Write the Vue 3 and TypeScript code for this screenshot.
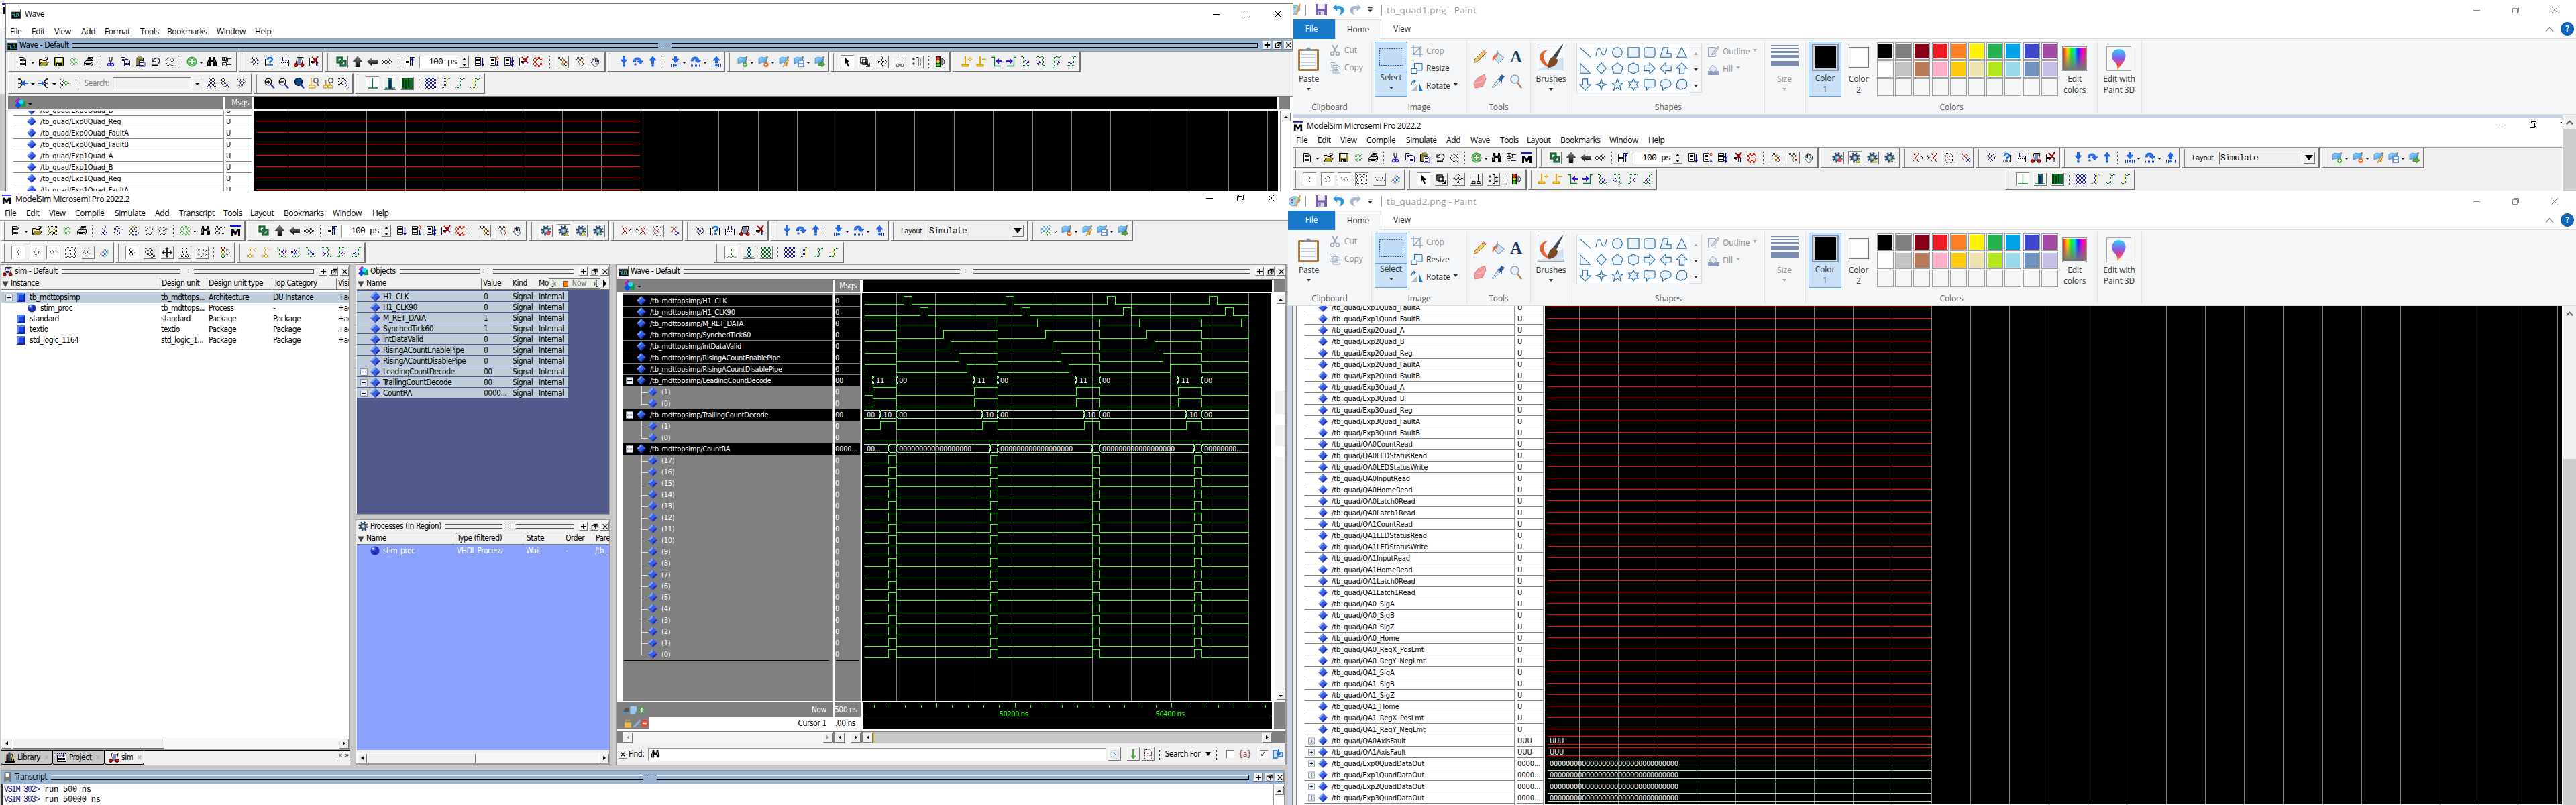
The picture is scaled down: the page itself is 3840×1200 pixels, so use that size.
<script setup lang="ts">
interface Tool { name: string; mods: string; w: number; ml: number }
interface Bar { w: number; ml: number; tools: Tool[] }
interface Cell { text: string; w: number }
interface Signal { name: string; val: string; kind: string }

const WIDTHS: Record<string, number> = { v: 6, '|': 2, time: 75, search: 178, layout: 182, M: 16 }

// "name@centre" tokens; ~ disabled, ! raised button, _ pressed button
function parse(spec: string): Tool[] {
  let end = 0
  return spec.split(' ').map((t) => {
    const m = /^([~!_]*)(.+)@(\d+)$/.exec(t)!
    const mods = (m[1].includes('~') ? ' off' : '') + (m[1].includes('!') ? ' raised' : '') + (m[1].includes('_') ? ' pressed' : '')
    const w = WIDTHS[m[2]] ?? (/raised|pressed/.test(mods) ? 20 : 16)
    const left = Number(m[3]) - w / 2
    const tool = { name: m[2], mods, w, ml: left - end }
    end = left + w
    return tool
  })
}
const bar = (w: number, spec: string, ml = 0): Bar => ({ w, ml, tools: parse(spec) })
const cells = (spec: string): Cell[] => {
  const parts = spec.split(';').map((p) => p.split('@'))
  return parts.map((p, i) => ({ text: p[0], w: i < parts.length - 1 ? Number(parts[i + 1][1]) - Number(p[1]) : 60 }))
}

const FILE = 'new@20 v@36 open@52 save@75 ~reload@97 print@119 |@135 cut@152 copy@174 paste@196 undo@219 ~redo@240 |@256 add@273 v@287 find@303 tree@325'
const FILE_OFF = 'new@20 v@36 open@52 ~save@75 ~reload@97 print@119 |@135 ~cut@152 ~copy@174 ~paste@196 ~undo@219 ~redo@240 |@256 ~add@273 ~v@287 find@303 ~tree@325'
const RUN = '!link@24 up@48 left@70 ~right@92 |@109 restart@125 time@177 run1@230 run2@252 run3@274 brk@296 ~stop@317 |@335 !~perf@353 !~perf2@379 hand@402'
const GEAR = '!gearA@25 _gearB@51 !gearC@77 !gearD@103'
const COV = '~covA@23 ~covB@44 !~covC@69 ~covD@95'
const COMP = '~comp@23 qst@45 outp@67 simu@89 endx@111'
const STEP = 'sIn@24 sOver@45 sOut@67 |@83 sInB@101 v@114 sOverB@131 v@145 sOutB@162'
const BOOK = 'bkA@23 v@37 bkB@54 v@68 bkC@85 bkD@107 v@121 bkE@138'
const BOOK_OFF = BOOK.replace('bkA@23 v@37', '~bkA@23 ~v@37')
const IO = '_~ioI@24 _~ioO@51 _~ioIO@76 _~ioT@102 !~ioALL@128 ~io6@152'
const MOUSE = '_ptr@24 !zrect@50 !~pan@76 !edges@102 !medit@128 |@146 light@162'
const MOUSE_OFF = '_~ptr@24 !~zrect@50 !pan@76 !~edges@102 !~medit@128 |@146 ~light@162'
const CUR = 'cuA@21 cuB@43 cuC@66 cuD@87 ~cuE@109 ~cuF@131 ~cuG@155 ~cuH@176'
const CUR_OFF = CUR.replace('cuA@', '~cuA@').replace('cuB@', '~cuB@').replace('cuC@', '~cuC@').replace('cuD@', '~cuD@')
const EDGE = '_edA@25 !edB@51 !edC@77 |@95 ~edD@112 ~edE@134 ~edF@156 ~edG@178'
const EDGE_OFF = EDGE.replace('_edA', '_~edA').replace('!edB', '!~edB').replace('!edC', '!~edC')

const mainRow = (file: string, book: string): Bar[] => [
  bar(364, file + ' M@348'), bar(418, RUN), bar(120, GEAR), bar(108, COV), bar(126, COMP),
  bar(177, STEP), bar(206, 'layout@107'), bar(154, book),
]

const windows = [
  {
    id: 'right', title: 'ModelSim Microsemi Pro 2022.2',
    menu: cells('File@7;Edit@39;View@73;Compile@112;Simulate@171;Add@231;Wave@267;Tools@311;Layout@351;Bookmarks@401;Window@474;Help@532'),
    rows: [mainRow(FILE, BOOK), [bar(168, IO), bar(179, MOUSE), bar(192, CUR), bar(194, EDGE, 517)]],
  },
  {
    id: 'main', title: 'ModelSim Microsemi Pro 2022.2',
    menu: cells('File@7;Edit@39;View@73;Compile@112;Simulate@171;Add@231;Transcript@267;Tools@333;Layout@373;Bookmarks@423;Window@496;Help@555'),
    rows: [mainRow(FILE_OFF, BOOK_OFF), [bar(168, IO), bar(179, MOUSE_OFF), bar(192, CUR_OFF), bar(194, EDGE_OFF, 517)]],
  },
  {
    id: 'wave', title: 'Wave',
    menu: cells('File@7;Edit@39;View@73;Add@113;Format@148;Tools@201;Bookmarks@241;Window@315;Help@372'),
    rows: [
      [bar(342, FILE), bar(126, COMP), bar(419, RUN), bar(176, STEP), bar(153, BOOK), bar(179, MOUSE), bar(192, CUR)],
      [bar(364, 'insL@21 v@36 insR@52 v@68 ~insC@84 |@101 search@201 ~fnA@303 ~fnB@322 ~fnC@346'), bar(149, 'zIn@23 zOut@44 zFull@67 zCurA@89 zCurB@111 ~zSel@133'), bar(194, EDGE)],
    ],
  },
]

const sig = (name: string, val = 'U', kind = 'top'): Signal => ({ name, val, kind })
const quad = (n: string) => sig('/tb_quad/' + n)
const topSignals: Signal[] = ['Exp0Quad_B', 'Exp0Quad_Reg', 'Exp0Quad_FaultA', 'Exp0Quad_FaultB', 'Exp1Quad_A', 'Exp1Quad_B', 'Exp1Quad_Reg', 'Exp1Quad_FaultA'].map(quad)
const reads = ['CountRead', 'LEDStatusRead', 'LEDStatusWrite', 'InputRead', 'HomeRead', 'Latch0Read', 'Latch1Read']
const pins = ['_SigA', '_SigB', '_SigZ', '_Home', '_RegX_PosLmt', '_RegY_NegLmt']
const quadSignals: Signal[] = [
  ...['Exp1Quad_FaultA', 'Exp1Quad_FaultB'].map(quad),
  ...['Exp2Quad', 'Exp3Quad'].flatMap((q) => ['_A', '_B', '_Reg', '_FaultA', '_FaultB'].map((s) => quad(q + s))),
  ...['QA0', 'QA1'].flatMap((q) => reads.map((s) => quad(q + s))),
  ...['QA0', 'QA1'].flatMap((q) => pins.map((s) => quad(q + s))),
  ...['QA0AxisFault', 'QA1AxisFault'].map((n) => sig('/tb_quad/' + n, 'UUU', 'plus')),
  ...[0, 1, 2, 3].map((n) => sig(`/tb_quad/Exp${n}QuadDataOut`, '0000...', 'plus')),
]
const simSignals: Signal[] = [
  ...['H1_CLK', 'H1_CLK90', 'M_RET_DATA', 'SynchedTick60', 'intDataValid', 'RisingACountEnablePipe', 'RisingACountDisablePipe'].map((n) => sig('/tb_mdttopsimp/' + n, '0')),
  sig('/tb_mdttopsimp/LeadingCountDecode', '00', 'minus'), sig('(1)', '0', 'child'), sig('(0)', '0', 'child last'),
  sig('/tb_mdttopsimp/TrailingCountDecode', '00', 'minus'), sig('(1)', '0', 'child'), sig('(0)', '0', 'child last'),
  sig('/tb_mdttopsimp/CountRA', '0000...', 'minus'),
  ...Array.from({ length: 18 }, (_, i) => sig(`(${17 - i})`, '0', i === 17 ? 'child last' : 'child')),
]

// Waveform geometry, relative to the black plotting area
const END = 576
const FALLS = [51, 202, 354, 506]
const mid = (row: number) => 10 + row * 17
function trace(row: number, start: number, edges: number[]): string {
  const hi = mid(row) - 5.5, lo = mid(row) + 6.5
  let level = start
  let d = `M4 ${level ? hi : lo}`
  for (const x of edges) { d += `H${x + 0.5}`; level = 1 - level; d += `V${level ? hi : lo}` }
  return d + `H${END}`
}
const pulses = (rise: number, width: number) => [0, 152, 303, 455].flatMap((o) => [rise + o, rise + o + width])
const upto = (rises: number[]) => FALLS.flatMap((f, i) => (i < rises.length ? [f, rises[i]] : [f]))
const lead = [16, 51, 167, 202, 319, 354, 471, 506]
const trail = [27, 51, 179, 202, 331, 354, 483, 506]
const count = [39, 51, 191, 202, 343, 354, 495, 506]
const traces: string[] = [
  trace(0, 0, pulses(62, 12)), trace(1, 0, pulses(86, 12)),
  trace(2, 1, upto([109, 261, 413, 565])), trace(3, 1, upto([121, 273, 424, 575])),
  trace(4, 1, upto([132, 284, 436])), trace(5, 1, upto([144, 296, 448])),
  trace(6, 0, [4, ...upto([156, 308, 459])]),
  trace(8, 0, lead), trace(9, 0, lead), trace(11, 0, trail), trace(12, 0, []),
  ...Array.from({ length: 18 }, (_, i) => trace(14 + i, 0, count)),
]
function bus(row: number, edges: number[]): string {
  const hi = mid(row) - 5.5, lo = mid(row) + 6.5, c = mid(row) + 0.5
  const pts = [1, ...edges, END + 2]
  let d = ''
  for (let i = 0; i < pts.length - 1; i++) {
    const a = pts[i] + 1.5, b = pts[i + 1] - 1
    d += `M${a} ${hi}H${b}M${a} ${lo}H${b}`
    if (i) d += `M${a} ${hi}L${a - 1.5} ${c}L${a} ${lo}`
    if (i < pts.length - 2) d += `M${b} ${hi}L${b + 1.5} ${c}L${b} ${lo}`
  }
  return d
}
const buses = [bus(7, lead), bus(10, trail), bus(13, count)]
const busText: { x: number; row: number; t: string }[] = [
  ...[0, 2, 4, 6].flatMap((i) => [
    { x: lead[i] + 5, row: 7, t: '11' }, { x: lead[i + 1] + 4, row: 7, t: '00' },
    { x: trail[i] + 5, row: 10, t: '10' }, { x: trail[i + 1] + 4, row: 10, t: '00' },
    { x: count[i + 1] + 4, row: 13, t: i === 6 ? '00000000...' : '0'.repeat(18) },
  ]),
  { x: 7, row: 10, t: '00' }, { x: 7, row: 13, t: '00...' },
]
const grid = (first: number, n: number, h: number, pitch = 58.35) =>
  Array.from({ length: n }, (_, i) => `M${Math.round(first + i * pitch) + 0.5} 0V${h}`).join('')
const ticks = Array.from({ length: 26 }, (_, i) => ({ x: Math.round(16.5 + i * 23.34) + 0.5, major: i % 5 === 4 }))

const instances = [
  { n: 'tb_mdttopsimp', u: 'tb_mdttops...', t: 'Architecture', c: 'DU Instance', ico: 'block', cls: 'sel' },
  { n: 'stim_proc', u: 'tb_mdttops...', t: 'Process', c: '-', ico: 'ball', cls: 'sub' },
  { n: 'standard', u: 'standard', t: 'Package', c: 'Package', ico: 'block', cls: '' },
  { n: 'textio', u: 'textio', t: 'Package', c: 'Package', ico: 'block', cls: '' },
  { n: 'std_logic_1164', u: 'std_logic_1...', t: 'Package', c: 'Package', ico: 'block', cls: '' },
]
const objects = [
  ['H1_CLK', '0'], ['H1_CLK90', '0'], ['M_RET_DATA', '1'], ['SynchedTick60', '1'], ['intDataValid', '0'],
  ['RisingACountEnablePipe', '0'], ['RisingACountDisablePipe', '0'], ['LeadingCountDecode', '00'], ['TrailingCountDecode', '00'], ['CountRA', '0000...'],
]
const tabs = [{ n: 'Library', i: 'lib', w: 77 }, { n: 'Project', i: 'outp', w: 78 }, { n: 'sim', i: 'simu', w: 59 }]

const paints = ['tb_quad1.png - Paint', 'tb_quad2.png - Paint']
const swatches = [
  '#000000', '#7f7f7f', '#880015', '#ed1c24', '#ff7f27', '#fff200', '#22b14c', '#00a2e8', '#3f48cc', '#a349a4',
  '#ffffff', '#c3c3c3', '#b97a57', '#ffaec9', '#ffc90e', '#efe4b0', '#b5e61d', '#99d9ea', '#7092be', '#c8bfe7',
  ...Array(10).fill('#f5f6f7'),
]
const shapes = [
  'M1 2L19 18', 'M1 16C4 -2 8 2 10 9S16 18 19 3', 'M10 2A8 8 0 1 1 9.9 2Z', 'M1 2H19V18H1Z', 'M5 2H15Q19 2 19 6V14Q19 18 15 18H5Q1 18 1 14V6Q1 2 5 2Z', 'M6 2H14L12 12H19V18H1Z', 'M10 2L18 18H2Z',
  'M2 2L18 18H2Z', 'M10 1L18 10L10 19L2 10Z', 'M10 1L19 8L16 18H4L1 8Z', 'M10 1L18 5V15L10 19L2 15V5Z', 'M1 6H10V1L19 10L10 19V14H1Z', 'M19 6H10V1L1 10L10 19V14H19Z', 'M6 19V10H1L10 1L19 10H14V19Z',
  'M6 1V10H1L10 19L19 10H14V1Z', 'M10 1L12 8L19 10L12 12L10 19L8 12L1 10L8 8Z', 'M10 1L12.5 7.5H19L14 11.5L16 19L10 14.5L4 19L6 11.5L1 7.5H7.5Z', 'M10 1L12.5 5.5H18L15 10L18 14.5H12.5L10 19L7.5 14.5H2L5 10L2 5.5H7.5Z', 'M3 2H17Q19 2 19 4V12Q19 14 17 14H9L5 19V14H3Q1 14 1 12V4Q1 2 3 2Z', 'M10 2C22 2 22 15 10 15L5 19V14C-3 9 2 2 10 2Z', 'M5 4Q7 0 10 2Q14 0 16 4Q20 6 18 9Q20 13 16 15Q14 19 11 16Q8 20 5 16Q0 16 2 12Q0 8 3 7Q2 4 5 4Z',
]
const zeros32 = '0'.repeat(32)
</script>

<template>
  <div class="desk">
    <svg class="defs" width="0" height="0">
      <defs>
        <linearGradient id="gGlass" x1="0" y1="0" x2="1" y2="1"><stop offset="0" stop-color="#9adcff" /><stop offset="1" stop-color="#3a8fe0" /></linearGradient>
        <linearGradient id="gArrow" x1="0" y1="0" x2="0" y2="1"><stop offset="0" stop-color="#888" /><stop offset="1" stop-color="#000" /></linearGradient>
        <linearGradient id="gRainbow"><stop offset="0" stop-color="#f22" /><stop offset=".18" stop-color="#fd0" /><stop offset=".36" stop-color="#1e2" /><stop offset=".5" stop-color="#0dd" /><stop offset=".66" stop-color="#22f" /><stop offset=".85" stop-color="#e0d" /><stop offset="1" stop-color="#f24" /></linearGradient>
        <linearGradient id="gFade" x1="0" y1="0" x2="0" y2="1"><stop offset=".2" stop-color="#777" stop-opacity="0" /><stop offset="1" stop-color="#777" /></linearGradient>
        <linearGradient id="gPin" x1="0" y1="0" x2="0" y2="1"><stop offset="0" stop-color="#2bd4f5" /><stop offset=".45" stop-color="#8a5be8" /><stop offset=".75" stop-color="#ee3f70" /><stop offset="1" stop-color="#ffc000" /></linearGradient>
      </defs>
      <symbol id="new" viewBox="0 0 16 16"><path d="M3.5 1.5H10L13.5 5V14.5H3.5Z" fill="#fff" stroke="#000" /><path d="M5 4.5H9M5 6.5H12M5 8.5H12M5 10.5H12M5 12.5H12M10 1V5H13" stroke="#222" fill="none" /></symbol>
      <symbol id="open" viewBox="0 0 16 16"><path d="M1.5 14V4.500H6L7 6.500H12V9" fill="#ffe98a" stroke="#000" /><path d="M1.500 14.500L4.500 8.500H15.500L12 14.500Z" fill="#a89a10" stroke="#000" /><path d="M9 3Q12 0 14 4M14 1V4.500H11" fill="none" stroke="#000" /></symbol>
      <symbol id="save" viewBox="0 0 16 16"><path d="M1.500 1.500H14.500V14.500H2.500L1.500 13Z" fill="#9a9010" stroke="#000" /><path d="M4 2H12V8H4Z" fill="#f4f4f4" /><path d="M4 10H12V14H4Z" fill="#000" /><path d="M5 11H7V14H5Z" fill="#fff" /></symbol>
      <symbol id="reload" viewBox="0 0 16 16"><path d="M2 7Q3 2 9 3L9 1L14 5L9 8V6Q6 5 5 8ZM14 9Q13 14 7 13V15L2 11L7 8V10Q10 11 11 8Z" fill="#4cae4c" /></symbol>
      <symbol id="print" viewBox="0 0 16 16"><path d="M5 6L7 1.500H14L12 6" fill="#fff" stroke="#000" /><path d="M1.500 8.500L4 6.500H14.500V11L12 14.500H2Z" fill="#ddd" stroke="#000" /><path d="M2 10.500H12L14 8M7 3.500H12M6 5H11M4 12.500H10" stroke="#000" fill="none" /></symbol>
      <symbol id="cut" viewBox="0 0 16 16"><path d="M6 1V5L9 11M10 1V5L7 11" stroke="#223" fill="none" stroke-width="1.300" /><circle cx="5.500" cy="12.500" r="2" fill="none" stroke="#2222c8" stroke-width="1.300" /><circle cx="10.500" cy="12.500" r="2" fill="none" stroke="#2222c8" stroke-width="1.300" /></symbol>
      <symbol id="copy" viewBox="0 0 16 16"><path d="M1.500 1.500H7L9.500 4V11.500H1.500Z" fill="#fff" stroke="#222" /><path d="M6.500 4.500H12L14.500 7V14.500H6.500Z" fill="#fff" stroke="#1a1a90" /><path d="M3 4.500H6M3 6.500H6M8 8.500H13M8 10.500H13M8 12.500H13" stroke="#1a1a90" /></symbol>
      <symbol id="paste" viewBox="0 0 16 16"><path d="M1.500 2.500H12.500V13.500H1.500Z" fill="#8c8640" stroke="#000" /><path d="M4 1H10V4H4Z" fill="#e8d850" stroke="#000" stroke-width=".6" /><path d="M6.500 6.500H12L15 9V15H6.500Z" fill="#fff" stroke="#1a1a90" /><path d="M8 9.500H13M8 11.500H13M8 13.500H13" stroke="#1a1a90" /></symbol>
      <symbol id="undo" viewBox="0 0 16 16"><path d="M4 7Q7 1 12 3Q16 7 11 12M3 3V8H8" fill="none" stroke="#223" stroke-width="1.300" /><path d="M3 13.500H12" stroke="#000" stroke-width="2" /></symbol>
      <symbol id="redo" viewBox="0 0 16 16"><path d="M12 7Q9 1 4 3Q0 7 5 12M13 3V8H8" fill="none" stroke="#222" stroke-width="1.400" /><path d="M4 13.500H13" stroke="#222" stroke-width="2" /></symbol>
      <symbol id="add" viewBox="0 0 16 16"><circle cx="8" cy="8" r="7" fill="#52b152" stroke="#2e8b2e" /><circle cx="8" cy="8" r="5.500" fill="none" stroke="#a0dca0" /><path d="M8 4V12M4 8H12" stroke="#fff" stroke-width="2" /></symbol>
      <symbol id="find" viewBox="0 0 16 16"><path d="M3 1H6V4L8 6L10 4V1H13V4L15 9V14H10V9H6V14H1V9L3 4Z" fill="#000" /><path d="M4 5L3 9V12M12 5V9" stroke="#fff" fill="none" stroke-width=".8" /></symbol>
      <symbol id="tree" viewBox="0 0 16 16"><path d="M1.500 1.500H7.500V6.500H1.500ZM1.500 9.500H7.500V14.500H1.500ZM8 3.500H15M8 12.500H15M3 4H6M4.500 2.500V5.500M3 12H6M9.500 4V8H5" fill="none" stroke="#222" /></symbol>
      <symbol id="M" viewBox="0 0 16 16"><path d="M0 0H16V2H0Z" fill="#1010ff" /><path d="M1 5H5L8 10L11 5H15V16H12V9L9 14H7L4 9V16H1Z" fill="#000" /></symbol>
      <symbol id="link" viewBox="0 0 16 16"><path d="M2 2H9V9H2ZM7 7H14V14H7Z" fill="none" stroke="#043d1a" stroke-width="3" /><path d="M2 2H9V9H2ZM7 7H14V14H7Z" fill="none" stroke="#27a052" stroke-width="1" /></symbol>
      <symbol id="up" viewBox="0 0 16 16"><path d="M8 0L15 8H11V16H5V8H1Z" fill="url(#gArrow)" stroke="#222" stroke-width=".5" /></symbol>
      <symbol id="left" viewBox="0 0 16 16"><path d="M0 8L7 2V5H16V11H7V14Z" fill="url(#gArrow)" /></symbol>
      <symbol id="right" viewBox="0 0 16 16"><path d="M16 8L9 2V5H0V11H9V14Z" fill="#333" /></symbol>
      <symbol id="restart" viewBox="0 0 16 16"><path d="M1.500 2.500H9.500V14.500H1.500Z" fill="#fff" stroke="#222" /><path d="M3 5.500H8M3 7.500H8M3 9.500H8M3 11.500H8" stroke="#000" /><path d="M9 1.500H16" stroke="#009" /><path d="M12.500 14V4M10.500 6L12.500 3L14.500 6" fill="none" stroke="#009" stroke-width="1.300" /></symbol>
      <symbol id="run1" viewBox="0 0 16 16"><path d="M1.500 1.500H9.500V13.500H1.500Z" fill="#fff" stroke="#222" /><path d="M3 4.500H8M3 6.500H8M3 8.500H8M3 10.500H8" stroke="#000" /><path d="M12.500 3V14M10.500 11L12.500 14.500L14.500 11" fill="none" stroke="#009" stroke-width="1.300" /></symbol>
      <symbol id="run2" viewBox="0 0 16 16"><path d="M1.500 1.500H9.500V13.500H1.500Z" fill="#fff" stroke="#222" /><path d="M3 4.500H8M3 6.500H8M3 8.500H8M3 10.500H8" stroke="#000" /><path d="M12.500 7V15" stroke="#009" /><path d="M12.500 0.500L14.500 3L12.500 5.500L10.500 3Z" fill="#fff" stroke="#d22" /><path d="M10 15L12.500 12L15 15" fill="none" stroke="#009" /></symbol>
      <symbol id="run3" viewBox="0 0 16 16"><path d="M1.500 1.500H9.500V13.500H1.500Z" fill="#fff" stroke="#222" /><path d="M3 4.500H8M3 6.500H8M3 8.500H8M3 10.500H8" stroke="#000" /><path d="M12.500 1V14M10 6L12.500 10L15 6M10 11L12.500 15L15 11" fill="none" stroke="#009" stroke-width="1.200" /></symbol>
      <symbol id="brk" viewBox="0 0 16 16"><path d="M1.500 2.500H9.500V14.500H1.500Z" fill="#fff" stroke="#222" /><path d="M3 5.500H8M3 7.500H8M3 9.500H8M3 11.500H8" stroke="#000" /><path d="M5 1L14 10M14 0L6 11" stroke="#900" stroke-width="2" /><path d="M12.500 9V15" stroke="#009" /></symbol>
      <symbol id="stop" viewBox="0 0 16 16"><path d="M5 1H12L15 4V6H10V5H6V11H10V10H15V13L12 16H5L1 12V4Z" fill="#e21" /></symbol>
      <symbol id="perf" viewBox="0 0 16 16"><path d="M2 1H8L15 8V15H8V8L2 4Z" fill="#333" /><path d="M7 4H11V14H7Z" fill="#a08000" /><path d="M12 9H15V13H12Z" fill="#d00" /></symbol>
      <symbol id="perf2" viewBox="0 0 16 16"><path d="M2 1H12L14 6L8 8L2 4Z" fill="#444" /><path d="M5 5H9V15H8Z" fill="#777" /><path d="M11 7H14V14H11Z" fill="#c40" /></symbol>
      <symbol id="hand" viewBox="0 0 16 16"><path d="M4 9V4L5.500 4L6.500 8V2L8 2L8.500 8L9.500 2.500L11 3V8L12 5L13.500 6L13 11L10 15H7L2 9L3 8Z" fill="#fff" stroke="#223" /><path d="M8 10L12 15L13 9Z" fill="#8fb0dd" /></symbol>
      <symbol id="gear" viewBox="0 0 16 16"><circle cx="8" cy="8" r="6.300" fill="none" stroke="#2f4a66" stroke-width="3" stroke-dasharray="2.500 2.450" /><circle cx="8" cy="8" r="4.300" fill="#7f9cb8" stroke="#2f4a66" stroke-width="2" /><circle cx="8" cy="8" r="1.600" fill="#e8eef4" /></symbol>
      <symbol id="gearA" viewBox="0 0 16 16"><use href="#gear" width="16" height="16" /><circle cx="11.500" cy="12" r="3" fill="#d85050" /></symbol>
      <symbol id="gearB" viewBox="0 0 16 16"><use href="#gear" width="16" height="16" /><path d="M9 16L12 10L16 16Z" fill="#e8e040" stroke="#333" stroke-width=".6" /></symbol>
      <symbol id="gearC" viewBox="0 0 16 16"><use href="#gear" width="16" height="16" /><path d="M8 15L11 9L15 15Z" fill="#e8e040" stroke="#333" stroke-width=".6" /></symbol>
      <symbol id="gearD" viewBox="0 0 16 16"><use href="#gear" width="16" height="16" /><path d="M8 10L13 12L9 15Z" fill="#6c6" /></symbol>
      <symbol id="covA" viewBox="0 0 16 16"><path d="M1 1L9 14M9 1L1 14" stroke="#a00" stroke-width="1.600" /><path d="M15 4V11L11 7.500Z" fill="#222" /></symbol>
      <symbol id="covB" viewBox="0 0 16 16"><path d="M7 1L15 14M15 1L7 14" stroke="#a00" stroke-width="1.600" /><path d="M1 4V11L5 7.500Z" fill="#222" /></symbol>
      <symbol id="covC" viewBox="0 0 16 16"><path d="M3 1.500H10L13.500 5V15H3Z" fill="#fff" stroke="#000" /><path d="M5 5L10 12M10 6L5 13" stroke="#c00" /></symbol>
      <symbol id="covD" viewBox="0 0 16 16"><path d="M2 2L12 12M11 2L2 11" stroke="#a00" stroke-width="1.600" /><circle cx="11" cy="12" r="3.500" fill="#44a" /></symbol>
      <symbol id="comp" viewBox="0 0 16 16"><path d="M2 4L7 9M5 1V7M9 2L14 9M9 13L14 8M3 9L7 14" stroke="#223" stroke-width="2" fill="none" /><path d="M8 4V12" stroke="#22c" stroke-width="2" /></symbol>
      <symbol id="qst" viewBox="0 0 16 16"><path d="M1.500 4V14.500H14.500V4" fill="#fff" stroke="#000" /><path d="M1 2.500H15" stroke="#000" stroke-dasharray="2 1" /><path d="M3 11.500H13M3 13H13" stroke="#000" stroke-dasharray="2 1" /><path d="M5 5Q5 2 8.500 2Q12 2 12 5Q12 7 8.500 8V10.500" fill="none" stroke="#1c78e8" stroke-width="2.500" /><path d="M7 12H10V14H7Z" fill="#1c78e8" /></symbol>
      <symbol id="outp" viewBox="0 0 16 16"><path d="M1.500 5V14.500H14.500V5" fill="#fff" stroke="#000" /><path d="M1 2.500H15M3 9.500H13M3 11.500H13" stroke="#003" stroke-dasharray="2 1" /><path d="M5.500 1V7M3.500 5L5.500 7L7.500 5M10.500 1V7M8.500 5L10.500 7L12.500 5" stroke="#116" fill="none" /></symbol>
      <symbol id="simu" viewBox="0 0 16 16"><path d="M5 1.500H14L12 12H3Z" fill="#fff" stroke="#000" /><path d="M6 4H12M6 6H11M5 8H11M5 10H11" stroke="#116" /><circle cx="3" cy="13" r="2.500" fill="#c11" stroke="#400" /><circle cx="12.500" cy="13" r="2.500" fill="#c11" stroke="#400" /></symbol>
      <symbol id="endx" viewBox="0 0 16 16"><path d="M1.500 2.500H11.500V14.500H1.500Z" fill="#fff" stroke="#222" /><path d="M3 5.500H9M3 7.500H9M3 9.500H9M3 11.500H9" stroke="#000" /><path d="M5 1L14 10M14 0L6 11" stroke="#900" stroke-width="2" /><path d="M13 9V15M10 14.500H16" stroke="#116" /></symbol>
      <symbol id="sIn" viewBox="0 0 16 16"><path d="M6.500 0H9.500V5H13L8 11L3 5H6.500Z" fill="#1f6bf0" stroke="#0b3bc0" stroke-width=".6" /><circle cx="8" cy="13.700" r="2" fill="#1f6bf0" /></symbol>
      <symbol id="sOver" viewBox="0 0 16 16"><path d="M1 8Q2 1 8 2Q12 2 13 7H16L11.500 12L7 7H10Q9 5 7 5Q5 5 4.500 8Z" fill="#2b74f2" stroke="#0b3bc0" stroke-width=".6" /><circle cx="4" cy="12" r="1.800" fill="#1f6bf0" /></symbol>
      <symbol id="sOut" viewBox="0 0 16 16"><path d="M6.500 11H9.500V6H13L8 0L3 6H6.500Z" fill="#1f6bf0" stroke="#0b3bc0" stroke-width=".6" /><circle cx="8" cy="13.700" r="2" fill="#1f6bf0" /></symbol>
      <symbol id="sInB" viewBox="0 0 16 16"><path d="M6.500 0H9.500V4H13L8 10L3 4H6.500Z" fill="#1f6bf0" stroke="#0b3bc0" stroke-width=".6" /><path d="M1.500 11V16M4.500 11V16M11.500 11V16M14.500 11V16" stroke="#1144cc" /><circle cx="8" cy="13.500" r="2" fill="#1f6bf0" /></symbol>
      <symbol id="sOverB" viewBox="0 0 16 16"><path d="M1 7Q2 0 8 1Q12 1 13 6H16L11.500 10L7 6H10Q9 4 7 4Q5 4 4.500 7Z" fill="#2b74f2" stroke="#0b3bc0" stroke-width=".6" /><path d="M1 14H15" stroke="#1144cc" stroke-width="3" stroke-dasharray="1 1" /></symbol>
      <symbol id="sOutB" viewBox="0 0 16 16"><path d="M6.500 10H9.500V6H13L8 0L3 6H6.500Z" fill="#1f6bf0" stroke="#0b3bc0" stroke-width=".6" /><path d="M1.500 11V16M4.500 11V16M11.500 11V16M14.500 11V16" stroke="#1144cc" /><circle cx="8" cy="13.500" r="2" fill="#1f6bf0" /></symbol>
      <symbol id="flag" viewBox="0 0 16 16"><path d="M13 0H15L12 15H10Z" fill="#b98b3c" /><path d="M1 3L5 1L9 2L14 1L12 10L7 9L1 11Z" fill="url(#gGlass)" stroke="#2a70b0" stroke-width=".6" /></symbol>
      <symbol id="bkA" viewBox="0 0 16 16"><use href="#flag" width="16" height="16" /><circle cx="11.500" cy="12.500" r="3.500" fill="#49a63c" /><path d="M11.500 10.500V14.500M9.500 12.500H13.500" stroke="#fff" /></symbol>
      <symbol id="bkB" viewBox="0 0 16 16"><use href="#flag" width="16" height="16" /><circle cx="12" cy="12.500" r="3.500" fill="#e8641e" /><path d="M10 12.500H14" stroke="#fff" stroke-width="1.300" /></symbol>
      <symbol id="bkC" viewBox="0 0 16 16"><use href="#flag" width="16" height="16" /><path d="M6 16L8 11L13 4L15 6L10 13Z" fill="#eebb55" stroke="#a87018" stroke-width=".6" /></symbol>
      <symbol id="bkD" viewBox="0 0 16 16"><use href="#flag" width="16" height="16" /><path d="M6 6H16V16H6Z" fill="#6d8fd6" /><path d="M8 7H14V10H8ZM8 12H14V15H8Z" fill="#fff" /></symbol>
      <symbol id="bkE" viewBox="0 0 16 16"><use href="#flag" width="16" height="16" /><path d="M6 10H11V7L16 12L11 16V14H6Z" fill="#52a83c" stroke="#2c6c1e" stroke-width=".6" /></symbol>
      <symbol id="ioT" viewBox="0 0 16 16"><path d="M1 1H15V15H1ZM5 5H11M8 5V12" fill="none" stroke="#000" stroke-width="1.500" /></symbol>
      <symbol id="io6" viewBox="0 0 16 16"><path d="M1 11L9 1L12 4L4 14Z" fill="#c9a" /><path d="M4 13L12 3L15 5L8 16Z" fill="#27f" /><path d="M10 10L15 4V10L11 15Z" fill="#6bb" /></symbol>
      <symbol id="ptr" viewBox="0 0 16 16"><path d="M4 1L12 9H8.500L11 14.500L9 15.500L6.500 10L4 12Z" fill="#000" /></symbol>
      <symbol id="zrect" viewBox="0 0 16 16"><path d="M2 2H10V10H2Z" fill="none" stroke="#111" stroke-width="1.500" /><path d="M5 5H12V12H5Z" fill="none" stroke="#111" stroke-width="1.500" /><path d="M9 9L15 15M15 10V15H10" stroke="#000" fill="none" stroke-width="1.500" /></symbol>
      <symbol id="pan" viewBox="0 0 16 16"><path d="M8 0L11 3H9V7H13V5L16 8L13 11V9H9V13H11L8 16L5 13H7V9H3V11L0 8L3 5V7H7V3H5Z" fill="#222" /></symbol>
      <symbol id="edges" viewBox="0 0 16 16"><path d="M5.500 1V11M11.500 1V11M1 14.500H7M9 14.500H15M3 11.500H7V15H3ZM10 11.500H14V15H10Z" stroke="#111" fill="none" /></symbol>
      <symbol id="medit" viewBox="0 0 16 16"><path d="M1 4H5M1 11H5M3 2V6M3 9V13M7 1.500H10V14.500H7M11 5.500H15M11 11.500H15M13 3.500V7.500M13 9.500V13.500" stroke="#111" fill="none" /></symbol>
      <symbol id="light" viewBox="0 0 16 16"><path d="M2 0H9V16H2Z" fill="#111" /><circle cx="5.500" cy="3" r="2.400" fill="#f22" /><circle cx="5.500" cy="8" r="2.400" fill="#dd2" /><circle cx="5.500" cy="13" r="2.400" fill="#2d2" /><path d="M11 3Q15 5 15 8.500Q15 11 11 13Z" fill="#fff" stroke="#111" /></symbol>
      <symbol id="cuA" viewBox="0 0 16 16"><path d="M5 0H7V11H5ZM10 5H16V3.500H10ZM12.300 1H13.700V7H12.300Z" fill="#e8a800" /><path d="M1 12H11V15H1Z" fill="#f5c400" stroke="#7c5c00" stroke-width=".6" /></symbol>
      <symbol id="cuB" viewBox="0 0 16 16"><path d="M5 0H7V11H5ZM9 3.500H15V5H9Z" fill="#e8a800" /><path d="M1 12H11V15H1Z" fill="#f5c400" stroke="#7c5c00" stroke-width=".6" /></symbol>
      <symbol id="cuC" viewBox="0 0 16 16"><path d="M0 1.500H4.500V14.500H14" fill="none" stroke="#087a2c" stroke-width="1.300" /><path d="M6 7L11 3V6H15V9H11V12Z" fill="#3a10c8" /></symbol>
      <symbol id="cuD" viewBox="0 0 16 16"><path d="M16 1.500H12.500V14.500H2" fill="none" stroke="#087a2c" stroke-width="1.300" /><path d="M11 7L6 3V6H1V9H6V12Z" fill="#3a10c8" /></symbol>
      <symbol id="cuE" viewBox="0 0 16 16"><path d="M1 1H5V14H15" fill="none" stroke="#087a2c" stroke-width="2" /><path d="M6 6L12 11M12 7V11H8" stroke="#3a10c8" fill="none" stroke-width="2" /></symbol>
      <symbol id="cuF" viewBox="0 0 16 16"><path d="M2 1H12V14H16" fill="none" stroke="#087a2c" stroke-width="2" /><path d="M3 10H9M6 7V13" stroke="#3a10c8" fill="none" stroke-width="2" /></symbol>
      <symbol id="cuG" viewBox="0 0 16 16"><path d="M15 1H5V14H1" fill="none" stroke="#087a2c" stroke-width="2" /><path d="M8 10H13M10 7V13" stroke="#3a10c8" fill="none" stroke-width="2" /></symbol>
      <symbol id="cuH" viewBox="0 0 16 16"><path d="M16 1H12V14H2" fill="none" stroke="#087a2c" stroke-width="2" /><path d="M4 10H10M8 7V12" stroke="#3a10c8" fill="none" stroke-width="2" /></symbol>
      <symbol id="edA" viewBox="0 0 16 16"><path d="M8.500 1V15M1 15H16" stroke="#087a2c" fill="none" stroke-width="1.300" /></symbol>
      <symbol id="edB" viewBox="0 0 16 16"><path d="M5 0H12V16H5Z" fill="#14206c" /><path d="M1 15H6V2H11V15H16" stroke="#0a8a3a" fill="none" stroke-width="1.300" /></symbol>
      <symbol id="edC" viewBox="0 0 16 16"><path d="M0 0H16V16H0Z" fill="#04400a" /><path d="M1 15H4V2H8V15H12V2H15V15" stroke="#0a8a3a" fill="none" stroke-width="1.300" /></symbol>
      <symbol id="edD" viewBox="0 0 16 16"><path d="M0 0H16V16H0Z" fill="#22209c" /></symbol>
      <symbol id="edE" viewBox="0 0 16 16"><path d="M6 1H9V15H6Z" fill="#22209c" /><path d="M9 1H15M1 14.500H6" stroke="#087a2c" stroke-width="1.500" /><path d="M10 1V15" stroke="#fe0" stroke-width="2" /></symbol>
      <symbol id="edF" viewBox="0 0 16 16"><path d="M1 14H8V2H15" fill="none" stroke="#087a2c" stroke-width="2" /></symbol>
      <symbol id="edG" viewBox="0 0 16 16"><path d="M1 14H8V2H15" fill="none" stroke="#087a2c" stroke-width="2" /><path d="M7 2V14" stroke="#fe0" stroke-width="2" /></symbol>
      <symbol id="insL" viewBox="0 0 16 16"><path d="M1 2H4L7 6L4 8H1M4 8L7 10L4 14H1" fill="none" stroke="#000" stroke-width="1.300" /><path d="M6 8L11 4V7H16V9H11V12Z" fill="#1060f0" /></symbol>
      <symbol id="insR" viewBox="0 0 16 16"><path d="M15 2H12L9 6L12 8H15M12 8L9 10L12 14H15" fill="none" stroke="#000" stroke-width="1.300" /><path d="M9 8L5 4V7H0V9H5V12Z" fill="#1060f0" /></symbol>
      <symbol id="insC" viewBox="0 0 16 16"><path d="M1 2L6 6L1 8L6 10L1 15" fill="none" stroke="#333" stroke-width="2" /><path d="M9 4L13 8L9 12L6 8Z" fill="#2a2" /><path d="M13 8H16" stroke="#333" stroke-width="2" /></symbol>
      <symbol id="fnA" viewBox="0 0 16 16"><path d="M5 0H12V6L15 14H10V9L6 14H1Z" fill="#333" /><path d="M1 10L5 15" stroke="#22c" stroke-width="3" /></symbol>
      <symbol id="fnB" viewBox="0 0 16 16"><path d="M2 0H9V6L12 14H7V9L3 12Z" fill="#333" /><path d="M9 10L14 15L15 9Z" fill="#22c" /></symbol>
      <symbol id="fnC" viewBox="0 0 16 16"><path d="M2 2H12L8 9Z" fill="#333" /><path d="M4 12L9 15L15 5L12 4Z" fill="#56a" /></symbol>
      <symbol id="zIn" viewBox="0 0 16 16"><circle cx="6" cy="6" r="4.800" fill="#f4f4f4" stroke="#000" stroke-width="1.300" /><path d="M6 3V9M3 6H9" stroke="#000" stroke-width="1.300" /><path d="M10 10L15 15.500" stroke="#1a30d0" stroke-width="2.200" /></symbol>
      <symbol id="zOut" viewBox="0 0 16 16"><circle cx="6" cy="6" r="4.800" fill="#f4f4f4" stroke="#000" stroke-width="1.300" /><path d="M3 6H9" stroke="#000" stroke-width="1.300" /><path d="M10 10L15 15.500" stroke="#1a30d0" stroke-width="2.200" /></symbol>
      <symbol id="zFull" viewBox="0 0 16 16"><circle cx="7" cy="6" r="5.500" fill="#0a4a7c" stroke="#002" stroke-width="1.300" /><path d="M11 10L15 15.500" stroke="#1a30d0" stroke-width="2.200" /></symbol>
      <symbol id="zCurA" viewBox="0 0 16 16"><path d="M3 0H4.500V11H3Z" fill="#d08a00" /><path d="M0 11H10V15H0Z" fill="#fff3c0" stroke="#c88000" /><circle cx="11" cy="4" r="3.300" fill="#fff" stroke="#111" /><path d="M12 7L15 12" stroke="#555" stroke-width="2" /></symbol>
      <symbol id="zCurB" viewBox="0 0 16 16"><path d="M3 4H4.500V11H3ZM9 4H10.500V11H9Z" fill="#d08a00" /><path d="M0 11H6V15H0ZM7 11H14V15H7Z" fill="#fff3c0" stroke="#c88000" /><circle cx="11" cy="4" r="3.300" fill="#fff" stroke="#111" /></symbol>
      <symbol id="zSel" viewBox="0 0 16 16"><path d="M1 1H9V9H1Z" fill="none" stroke="#222" stroke-width="2" /><circle cx="9" cy="7" r="3.500" fill="#ccf" stroke="#000" /><path d="M11 10L15 15" stroke="#22c" stroke-width="2.500" /></symbol>

      <symbol id="diamond" viewBox="0 0 16 16"><path d="M8 0L0 8H8Z" fill="#7da6ef" /><path d="M8 0L16 8H8Z" fill="#4762d8" /><path d="M0 8L8 16V8Z" fill="#3f58cf" /><path d="M16 8L8 16V8Z" fill="#1f2a96" /><path d="M8 4L12 8L8 12L4 8Z" fill="#2c62f0" /></symbol>
      <symbol id="ball" viewBox="0 0 16 16"><circle cx="8" cy="8" r="7.500" fill="#2330b4" /><circle cx="5.500" cy="5" r="3.500" fill="#3f6ff0" /><circle cx="5" cy="4.500" r="1.700" fill="#dfe8ff" /></symbol>
      <symbol id="block" viewBox="0 0 14 14"><path d="M0 0H14L10 4H4V10L0 14Z" fill="#5f86ea" /><path d="M14 0V14H0L4 10H10V4Z" fill="#12249c" /><path d="M4 3H11V11H4Z" fill="#1a4be8" /></symbol>
      <symbol id="plus" viewBox="0 0 11 11"><path d="M.5.5H10.500V10.500H.5Z" fill="#eef2fa" stroke="#8c96a8" /><path d="M3 5.500H8M5.500 3V8" stroke="#000" /></symbol>
      <symbol id="minus" viewBox="0 0 11 11"><path d="M.5.5H10.500V10.500H.5Z" fill="#eef2fa" stroke="#8c96a8" /><path d="M2 5.500H9" stroke="#000" stroke-width="1.400" /></symbol>
      <symbol id="objs" viewBox="0 0 16 16"><path d="M6 0L11 5L6 9L1 5Z" fill="#c020d8" stroke="#601070" stroke-width=".6" /><path d="M9 5H16V14H9Z" fill="#1a9a50" /><circle cx="9.500" cy="6" r="3.500" fill="#18e0f8" /><path d="M5 6L10 11L5 16L0 11Z" fill="#0a50e0" /></symbol>
      <symbol id="wav" viewBox="0 0 16 16"><path d="M0 0H16V16H0Z" fill="#555" /><path d="M0 0H15V4H0Z" fill="#f4f4f4" /><path d="M1 5H15V15H1Z" fill="#000" /><path d="M1 8.500H5V12.500H9V7.500H12V12" stroke="#1fb56a" fill="none" stroke-width="1.400" /><path d="M6 6V14M10 13H15" stroke="#5050d0" stroke-width="1.200" /></symbol>
      <symbol id="lib" viewBox="0 0 16 16"><path d="M1 15H15" stroke="#000" stroke-width="2" /><path d="M3 4H5V14H3Z" fill="#d02020" stroke="#000" /><path d="M6 1H8V14H6Z" fill="#40b0e0" stroke="#000" /><path d="M9 4L11 3L14 14H11Z" fill="#e8d020" stroke="#000" /></symbol>
      <symbol id="trn" viewBox="0 0 16 16"><path d="M3 0H13V16L9 13H6L2 16Z" fill="#777" /><path d="M5 2H10V8H5Z" fill="#fff" /></symbol>
      <symbol id="pop" viewBox="0 0 11 11"><path d="M1.500 3.500H7.500V9.500H1.500ZM4 1.500H10V7M10 1.500L4.500 7" fill="none" stroke="#000" stroke-width="1.300" /></symbol>
      <symbol id="pls" viewBox="0 0 11 11"><path d="M5.500 1V10M1 5.500H10" stroke="#000" stroke-width="2" /></symbol>
      <symbol id="ex" viewBox="0 0 11 11"><path d="M1.500 1.500L9.500 9.500M9.500 1.500L1.500 9.500" stroke="#000" stroke-width="1.400" /></symbol>

      <symbol id="wmin" viewBox="0 0 12 12"><path d="M1 6.500H11" stroke="currentColor" /></symbol>
      <symbol id="wmax" viewBox="0 0 12 12"><path d="M1.500 1.500H10.500V10.500H1.500Z" fill="none" stroke="currentColor" /></symbol>
      <symbol id="wres" viewBox="0 0 12 12"><path d="M1.500 3.500H8.500V10.500H1.500ZM3.500 3V1.500H10.500V8.500H9" fill="none" stroke="currentColor" /></symbol>
      <symbol id="wclo" viewBox="0 0 12 12"><path d="M1 1L11 11M11 1L1 11" stroke="currentColor" /></symbol>
    </svg>

    <!-- Paint windows -->
    <section v-for="(title, pi) in paints" :key="title" class="paint" :class="'paint' + pi">
      <header class="ptitle">
        <svg class="qa pal" viewBox="0 0 20 20"><path d="M2 13Q-1 5 8 3Q17 2 18 9Q17 13 12 12Q10 13 11 16Q5 19 2 13Z" fill="#a9d6ee" stroke="#5a9cc4" /><circle cx="6" cy="8" r="1.600" fill="#e05050" /><circle cx="10" cy="6" r="1.600" fill="#60b850" /><circle cx="6" cy="12" r="1.500" fill="#5070d0" /><path d="M17 0L19 2L13 18L11 17Z" fill="#e09a40" /></svg>
        <i class="bar1"></i>
        <svg class="qa sv" viewBox="0 0 16 16"><path d="M0 0H16V16H0Z" fill="#7a5cb8" /><path d="M3 0H13V7H3Z" fill="#f1effa" /><path d="M4 10H12V16H4Z" fill="#d8d8e4" /><path d="M5 11H7V15H5Z" fill="#44336e" /></svg>
        <svg class="qa un" viewBox="0 0 16 16"><path d="M5 0L0 5L6 10V7Q13 6 10 14L8 16Q18 13 15 6Q12 2 5 3Z" fill="#2a98e0" /></svg>
        <svg class="qa re" viewBox="0 0 16 16"><path d="M11 0L16 5L10 10V7Q3 6 6 14L8 16Q-2 13 1 6Q4 2 11 3Z" fill="#a9b8ce" /></svg>
        <svg class="qa dd" viewBox="0 0 8 8"><path d="M1 1.500H7" stroke="#222" /><path d="M1 4H7L4 7Z" fill="#222" /></svg>
        <i class="bar2"></i>
        <span class="pname">{{ title }}</span>
        <span class="wbtns gray"><svg viewBox="0 0 12 12"><use href="#wmin" /></svg><svg viewBox="0 0 12 12"><use href="#wres" /></svg><svg viewBox="0 0 12 12"><use href="#wclo" /></svg></span>
      </header>
      <nav class="ptabs">
        <b class="pfile">File</b><b class="phome">Home</b><b class="pview">View</b>
        <svg class="chev" viewBox="0 0 12 12"><path d="M1 9L6 3.500L11 9" fill="none" stroke="#888" stroke-width="1.200" /></svg>
        <i class="help">?</i>
      </nav>
      <div class="ribbon">
        <div class="rg clip">
          <div class="rc">
            <div class="big w48">
              <svg width="34" height="38" viewBox="0 0 34 38"><rect x="1" y="4" width="31" height="33" rx="2" fill="#b07f45" /><rect x="4" y="7" width="25" height="27" fill="#fbfcfe" /><path d="M6 12.500H27M6 16.500H27M6 20.500H27M6 24.500H27M6 28.500H27" stroke="#bccbdc" /><path d="M9 7V4H13Q16 -1 20 4H24V7Z" fill="#8d9298" /></svg>
              <span>Paste</span><i class="car"></i>
            </div>
            <div class="lines dim">
              <span><svg width="18" height="18" viewBox="0 0 18 18"><path d="M5 1L11 12M13 1L7 12" stroke="#9aa6b8" stroke-width="2" /><circle cx="5" cy="14" r="2.500" fill="none" stroke="#9aa6b8" stroke-width="1.500" /><circle cx="13" cy="14" r="2.500" fill="none" stroke="#9aa6b8" stroke-width="1.500" /></svg>Cut</span>
              <span><svg width="18" height="18" viewBox="0 0 18 18"><path d="M1.500 1.500H8L11 4V13H1.500ZM6 5.500H13L16.500 8V17H6Z" fill="#eef1f6" stroke="#9aa9c2" /><path d="M8 9H14M8 11.500H14M8 14H14M3 5H5M3 8H5" stroke="#9aa9c2" /></svg>Copy</span>
            </div>
          </div>
          <small>Clipboard</small>
        </div>
        <div class="rg img">
          <div class="rc">
            <div class="big w49 on">
              <svg width="36" height="26" viewBox="0 0 36 26" class="dash"><rect x=".5" y=".5" width="35" height="25" fill="#c1dbf5" stroke="#1b5fa8" stroke-dasharray="2 1.500" /></svg>
              <hr /><span>Select</span><i class="car"></i>
            </div>
            <div class="lines three">
              <span class="dimt"><svg width="18" height="18" viewBox="0 0 18 18"><path d="M4 0V14H18M0 4H14V18M3 15L16 2" fill="none" stroke="#8d9cb8" stroke-width="1.300" /></svg>Crop</span>
              <span><svg width="18" height="18" viewBox="0 0 18 18"><path d="M5.500 1.500H17V12H5.500Z" fill="#eaf4fc" stroke="#2f6da6" /><path d="M1 9.500H9V16.500H1Z" fill="#fff" stroke="#2f6da6" /></svg>Resize</span>
              <span><svg width="18" height="18" viewBox="0 0 18 18"><path d="M0 17H10V7Z" fill="#b9bdc3" /><path d="M12 17H18L12 3Z" fill="#2475b8" /><path d="M1 7Q1 2 6 2M4 0L7 2L4 5" fill="none" stroke="#2475b8" stroke-width="1.300" /></svg>Rotate<i class="car r"></i></span>
            </div>
          </div>
          <small>Image</small>
        </div>
        <div class="rg tools">
          <div class="tg">
            <svg viewBox="0 0 22 22"><path d="M2 20L4 14L16 2L20 5L8 17Z" fill="#f0c860" stroke="#8a6a30" /><path d="M15 3L17 1L21 4L19 6Z" fill="#e88080" /></svg>
            <svg viewBox="0 0 22 22"><path d="M10 4L20 12L12 20L5 12Z" fill="#cfe1f0" stroke="#5c7ea0" /><path d="M10 1V9" stroke="#777" /><path d="M8 7Q1 9 3 18Q6 12 10 10Z" fill="#e86a3c" /></svg>
            <em>A</em>
            <svg viewBox="0 0 22 22"><path d="M8 6L18 1L20 8L15 19L4 21L2 14Z" fill="#f09a9c" stroke="#dc7c80" /><path d="M2 14L13 12L20 4" fill="none" stroke="#fbd0d0" /></svg>
            <svg viewBox="0 0 22 22"><path d="M2 20L11 8L14 11L5 20Z" fill="#dfe9f4" stroke="#6d88a8" /><path d="M10 6L13 6L16 1L21 4L17 9V13Z" fill="#2a5f9a" /></svg>
            <svg viewBox="0 0 22 22"><circle cx="9" cy="8" r="6" fill="#e6f1fb" stroke="#8e9db0" stroke-width="1.500" /><path d="M13 13L19 21" stroke="#b08050" stroke-width="2.500" /></svg>
          </div>
          <small>Tools</small>
        </div>
        <div class="rg brushes">
          <div class="big w62">
            <svg width="40" height="40" viewBox="0 0 40 40"><rect x=".5" y=".5" width="39" height="39" fill="#f6f9fc" stroke="#9aa0a8" /><path d="M1 39H39V20Z" fill="#d5e2ef" /><path d="M16 9Q1 11 4 24Q8 34 20 36Q8 26 9 18Q10 12 16 9Z" fill="#e8602c" /><path d="M38 2L28 22L23 19L37 1Z" fill="#3d4654" /><path d="M16 36Q15 22 24 19L30 24Q30 34 16 36Z" fill="#7a4a22" /></svg>
            <span>Brushes</span><i class="car"></i>
          </div>
        </div>
        <div class="rg shp">
          <div class="rc">
            <div class="sgrid"><svg v-for="(d, i) in shapes" :key="i" viewBox="0 0 20 20"><path :d="d" :fill="i < 2 ? 'none' : '#eaf3fc'" stroke="#2768a6" stroke-width="1.200" /></svg></div>
            <div class="sscroll"><i class="car up"></i><i class="car"></i><i class="car ln"></i></div>
            <div class="lines dim">
              <span><svg width="18" height="18" viewBox="0 0 18 18"><path d="M1.500 2.500H12V16.500H1.500Z" fill="#eef1f6" stroke="#9aa9c2" /><path d="M6 13L16 1L18 3L8 14Z" fill="#dfe5ee" stroke="#8d9cb8" /></svg>Outline<i class="car r"></i></span>
              <span><svg width="18" height="18" viewBox="0 0 18 18"><path d="M1 12H18V18H1Z" fill="#8c9cc0" /><path d="M8 3L15 9L9 14L3 9Z" fill="#e2e8f2" stroke="#94a3bd" /></svg>Fill<i class="car r"></i></span>
            </div>
          </div>
          <small>Shapes</small>
        </div>
        <div class="rg size">
          <div class="big w61 dimt">
            <svg width="41" height="34" viewBox="0 0 41 34"><path d="M0 0H41V1H0ZM0 4H41V6H0ZM0 9H41V12H0ZM0 15H41V20H0ZM0 24H41V32H0Z" fill="#7a8db0" /></svg>
            <span>Size</span><i class="car"></i>
          </div>
        </div>
        <div class="rg cols">
          <div class="rc">
            <div class="big w49 on c1"><i class="sw black"></i><span>Color<br />1</span></div>
            <div class="big w50 c2"><i class="sw white"></i><span>Color<br />2</span></div>
            <div class="pgrid"><i v-for="(c, i) in swatches" :key="i" :style="{ background: c }"></i></div>
            <div class="big w54"><svg width="38" height="38" viewBox="0 0 38 38"><rect x=".5" y=".5" width="36" height="36" fill="#eee" stroke="#999" /><rect x="2" y="2" width="33" height="33" fill="url(#gRainbow)" /><rect x="2" y="2" width="33" height="33" fill="url(#gFade)" /></svg><span>Edit<br />colors</span></div>
          </div>
          <small>Colors</small>
        </div>
        <div class="rg p3d">
          <div class="big w66"><svg width="38" height="38" viewBox="0 0 38 38"><rect x=".5" y=".5" width="36" height="36" fill="#f6f6f7" stroke="#aaa" /><path d="M18 4Q31 5 28 18Q25 26 16 35Q17 28 13 24Q6 18 9 10Q12 4 18 4Z" fill="url(#gPin)" /></svg><span>Edit with<br />Paint 3D</span></div>
        </div>
      </div>
      <div v-if="pi === 1" class="canvas">
        <i class="strip"></i>
        <div class="slist quad">
          <div class="names"><div v-for="s in quadSignals" :key="s.name" class="srow" :class="s.kind">
            <svg class="bx"><use v-if="s.kind === 'plus'" href="#plus" /></svg><svg class="dm"><use href="#diamond" /></svg><span>{{ s.name }}</span></div></div>
          <div class="vals"><div v-for="s in quadSignals" :key="s.name" class="srow"><span>{{ s.val }}</span></div></div>
          <svg class="plot" width="1516" height="743">
            <path :d="grid(51, 26, 743, 58.3)" stroke="#808080" />
            <path v-for="i in 38" :key="i" :d="`M4 ${1.5 + (i - 1) * 17}H576`" stroke="#f00" />
            <template v-for="i in 6" :key="i">
              <path :d="`M4 ${641.5 + (i - 1) * 17}H576M4 ${653.5 + (i - 1) * 17}H576`" :stroke="i < 3 ? '#f00' : '#a8f0a8'" />
              <text x="7" :y="652 + (i - 1) * 17" class="wt">{{ i < 3 ? 'UUU' : zeros32 }}</text>
            </template>
          </svg>
        </div>
        <div class="pscroll"><svg viewBox="0 0 12 12"><path d="M1 9L6 4L11 9" fill="none" stroke="#555" stroke-width="2" /></svg><i></i></div>
      </div>
      <div v-else class="band"><i></i><div class="pscroll"><svg viewBox="0 0 12 12"><path d="M1 9L6 4L11 9" fill="none" stroke="#555" stroke-width="2" /></svg><i></i></div></div>
    </section>

    <!-- Simulator windows -->
    <section v-for="win in windows" :key="win.id" class="ms" :class="win.id">
      <header class="mtitle">
        <svg class="mico"><use :href="win.id === 'wave' ? '#wav' : '#M'" /></svg><span>{{ win.title }}</span>
        <span class="wbtns"><svg viewBox="0 0 12 12"><use href="#wmin" /></svg><svg viewBox="0 0 12 12"><use :href="win.id === 'wave' ? '#wmax' : '#wres'" /></svg><svg viewBox="0 0 12 12"><use href="#wclo" /></svg></span>
      </header>
      <nav class="menu"><span v-for="m in win.menu" :key="m.text" :style="{ width: m.w + 'px' }">{{ m.text }}</span></nav>
      <div v-if="win.id === 'wave'" class="phead blue"><svg class="pico"><use href="#wav" /></svg><span>Wave - Default</span><i class="rule"></i><i class="dots"></i><i class="rule end"></i>
        <b><svg><use href="#pls" /></svg></b><b><svg><use href="#pop" /></svg></b><b><svg><use href="#ex" /></svg></b></div>
      <div class="bars">
        <div v-for="(row, ri) in win.rows" :key="ri" class="brow">
          <div v-for="(g, gi) in row" :key="gi" class="tbar" :style="{ width: g.w + 'px', marginLeft: g.ml + 'px' }">
            <div v-for="(t, ti) in g.tools" :key="ti" class="tool" :class="[t.mods, { sep: t.name === '|' }]" :style="{ width: t.w + 'px', marginLeft: t.ml + 'px' }">
              <i v-if="t.name === 'v'" class="dcar"></i>
              <template v-else-if="t.name === 'time'"><span class="mono tbox">100 ps</span><span class="spin"><i class="u"></i><i></i></span></template>
              <template v-else-if="t.name === 'search'"><span class="slab">Search:</span><span class="sbox"></span><span class="sbtn"><i class="dcar"></i></span></template>
              <template v-else-if="t.name === 'layout'"><span class="llab">Layout</span><span class="mono lbox">Simulate</span><span class="lbtn"><i></i></span></template>
              <span v-else-if="t.name === 'ioI'" class="glyph">I</span>
              <span v-else-if="t.name === 'ioO'" class="glyph">O</span>
              <span v-else-if="t.name === 'ioIO'" class="glyph sm">I/O</span>
              <span v-else-if="t.name === 'ioALL'" class="glyph sm">ALL</span>
              <svg v-else-if="t.name !== '|'" width="16" height="16"><use :href="'#' + t.name" /></svg>
            </div>
          </div>
        </div>
      </div>

      <div v-if="win.id === 'wave'" class="wbody">
        <div class="whead"><span class="hn"><svg class="oico"><use href="#objs" /></svg><i class="dcar"></i></span><span class="hm">Msgs</span><span class="hb"></span><span class="hc"></span></div>
        <div class="slist topw">
          <div class="names"><div v-for="s in topSignals" :key="s.name" class="srow"><svg class="bx"></svg><svg class="dm"><use href="#diamond" /></svg><span>{{ s.name }}</span></div></div>
          <div class="vals"><div v-for="s in topSignals" :key="s.name" class="srow"><span>{{ s.val }}</span></div></div>
          <svg class="plot" width="1527" height="120"><path :d="grid(51, 26, 120, 58.4)" stroke="#808080" /><path v-for="i in 7" :key="i" :d="`M4 ${15.5 + (i - 1) * 17}H576`" stroke="#f00" /></svg>
          <div class="vscroll"><b><i class="dcar uu"></i></b></div>
        </div>
      </div>

      <div v-if="win.id === 'main'" class="work">
        <div class="panes">
          <div class="left">
            <div class="pane simp">
              <div class="phead"><svg class="pico"><use href="#simu" /></svg><span>sim - Default</span><i class="rule"></i><i class="dots"></i><i class="rule end"></i>
                <b><svg><use href="#pls" /></svg></b><b><svg><use href="#pop" /></svg></b><b><svg><use href="#ex" /></svg></b></div>
              <div class="thead s"><i class="fun"></i><span>Instance</span><span>Design unit</span><span>Design unit type</span><span>Top Category</span><span>Visil</span></div>
              <div class="tbody">
                <div v-for="r in instances" :key="r.n" class="irow" :class="r.cls"><div><svg v-if="r.cls === 'sel'" class="bx"><use href="#minus" /></svg><svg class="ic"><use :href="'#' + r.ico" /></svg><span>{{ r.n }}</span></div><span>{{ r.u }}</span><span>{{ r.t }}</span><span>{{ r.c }}</span><span>+ac</span></div>
              </div>
              <div class="hscroll"><b><i class="tri l"></i></b><em></em><b class="e"><i class="tri r"></i></b></div>
            </div>
            <div class="tabs">
              <span v-for="t in tabs" :key="t.n" :class="{ act: t.n === 'sim' }" :style="{ width: t.w + 'px' }"><svg><use :href="'#' + t.i" /></svg>{{ t.n }}<u>✕</u></span>
              <i></i><b>«</b><b>»</b>
            </div>
          </div>
          <div class="middle">
            <div class="pane objp">
              <div class="phead"><svg class="pico"><use href="#objs" /></svg><span>Objects</span><i class="rule"></i><i class="dots"></i><i class="rule end"></i>
                <b><svg><use href="#pls" /></svg></b><b><svg><use href="#pop" /></svg></b><b><svg><use href="#ex" /></svg></b></div>
              <div class="thead o"><i class="fun"></i><span>Name</span><span>Value</span><span>Kind</span><span>Mo</span><div class="now"><i>]←</i><i class="orange"></i><em>Now</em><i>→[</i></div><i class="tri r big"></i></div>
              <div class="obody">
                <div v-for="(o, i) in objects" :key="o[0]" class="orow"><svg class="bx"><use v-if="i > 6" href="#plus" /></svg><svg class="dm"><use href="#diamond" /></svg><span>{{ o[0] }}</span><span>{{ o[1] }}</span><span>Signal</span><span>Internal</span></div>
              </div>
            </div>
            <div class="pane prop">
              <div class="phead"><svg class="pico"><use href="#gear" /></svg><span>Processes (In Region)</span><i class="rule"></i><i class="dots"></i><i class="rule end"></i>
                <b><svg><use href="#pls" /></svg></b><b><svg><use href="#pop" /></svg></b><b><svg><use href="#ex" /></svg></b></div>
              <div class="thead p"><i class="fun"></i><span>Name</span><span>Type (filtered)</span><span>State</span><span>Order</span><span>Pare</span></div>
              <div class="pbody"><div class="prow"><svg class="dm"><use href="#ball" /></svg><span>stim_proc</span><span>VHDL Process</span><span>Wait</span><span>-</span><span>/tb_</span></div></div>
              <div class="hscroll"><b><i class="tri l"></i></b><em></em><b class="e"><i class="tri r"></i></b></div>
            </div>
          </div>
          <div class="pane wavp">
            <div class="phead"><svg class="pico"><use href="#wav" /></svg><span>Wave - Default</span><i class="rule"></i><i class="dots"></i><i class="rule end"></i>
              <b><svg><use href="#pls" /></svg></b><b><svg><use href="#pop" /></svg></b><b><svg><use href="#ex" /></svg></b></div>
            <div class="whead"><span class="hn"><svg class="oico"><use href="#objs" /></svg><i class="dcar"></i></span><span class="hm">Msgs</span><span class="hb"></span><span class="hc"></span></div>
            <div class="slist simw">
              <div class="names"><div v-for="(s, i) in simSignals" :key="i" class="srow" :class="s.kind"><svg class="bx"><use v-if="s.kind === 'minus'" href="#minus" /></svg><i v-if="s.kind.startsWith('child')" class="tw"></i><svg class="dm"><use href="#diamond" /></svg><span>{{ s.name }}</span></div><i class="insert"></i></div>
              <div class="vals"><div v-for="(s, i) in simSignals" :key="i" class="srow" :class="s.kind"><span>{{ s.val }}</span></div><i class="insert"></i></div>
              <svg class="plot" width="610" height="608">
                <path :d="grid(51, 10, 608, 58.35)" stroke="#808080" />
                <path v-for="(d, i) in traces" :key="i" :d="d" stroke="#38ff14" fill="none" />
                <path v-for="(d, i) in buses" :key="i" :d="d" stroke="#a4f5a0" fill="none" />
                <text v-for="(t, i) in busText" :key="i" :x="t.x" :y="mid(t.row) + 5" class="wt">{{ t.t }}</text>
              </svg>
              <div class="vscroll"><b><i class="dcar uu"></i></b><b class="dn"><i class="dcar"></i></b></div>
            </div>
            <div class="foot">
              <div class="fn"><div class="now1"><svg viewBox="0 0 50 14"><path d="M1 11H10V4H4Z" fill="#555" /><path d="M0 10H10V13H0Z" fill="#58b" /><path d="M12 1H22V8L19 13H12Z" fill="#9ec6ea" /><circle cx="30" cy="7" r="5" fill="#4aa84a" /><path d="M30 4V10M27 7H33" stroke="#fff" stroke-width="1.500" /></svg><span>Now</span></div>
                <div class="cur1"><svg viewBox="0 0 40 14"><path d="M3 6H13V13H3Z" fill="#f0b840" /><path d="M5 6V2H10V4" fill="none" stroke="#c8a050" stroke-width="1.500" /><path d="M17 12L26 3" stroke="#8ab0e0" stroke-width="3" /><circle cx="33" cy="7" r="5.500" fill="#e04838" /><path d="M30 7H36" stroke="#fff" stroke-width="1.500" /></svg><span>Cursor 1</span></div></div>
              <div class="fv"><span>500 ns</span><span>.00 ns</span></div>
              <svg class="plot" width="610" height="40"><path v-for="(t, i) in ticks" :key="i" :d="`M${t.x} ${t.major ? 1 : 4}V8`" stroke="#38ff14" /><text x="225" y="21" class="tt">50200 ns</text><text x="458" y="21" class="tt">50400 ns</text><path d="M3 23.500H607" stroke="#808080" /></svg>
              <div class="fr"></div>
            </div>
            <div class="scrolls">
              <div class="hs a"><b><i class="tri l dim"></i></b><b><i class="tri r dim"></i></b></div>
              <div class="hs b"><b><i class="tri l"></i></b><b><i class="tri r"></i></b></div>
              <div class="hs c"><b><i class="tri l"></i></b><em></em><u></u><b><i class="tri r"></i></b></div>
            </div>
            <div class="findbar">
              <b class="x"><svg><use href="#ex" /></svg></b><span>Find:</span><div class="fbox"><svg><use href="#find" /></svg></div>
              <b class="fb m4"><svg viewBox="0 0 16 16"><circle cx="8" cy="8" r="6.500" fill="#e8f0fa" stroke="#8fb0dc" stroke-dasharray="1 1" /><path d="M6 5L9 8L6 11" fill="none" stroke="#4a80c8" /></svg></b>
              <b class="fb m9"><svg viewBox="0 0 16 16"><path d="M6.500 0H9.500V10H12L8 16L4 10H6.500Z" fill="#4aa03c" /></svg></b>
              <b class="fb m3"><svg viewBox="0 0 16 16"><path d="M2.500.5H10L13.500 4V15.500H2.500Z" fill="#fff" stroke="#000" stroke-dasharray="1.500 1" /><path d="M4 4L9 9M9 7L5 12M10 10H13" stroke="#c00" stroke-dasharray="1 1" /></svg></b>
              <i class="vs"></i><span>Search For</span><i class="bigcar"></i><i class="vs v2"></i><i class="chk"></i><span class="rx">{a}</span><i class="chk on2">✓</i>
              <svg class="wrap" viewBox="0 0 16 16"><path d="M1 3H7V14H1ZM10 6H15V12H8" fill="#cfe2f6" stroke="#1d64b4" stroke-width="1.500" /><path d="M9 1V9M6 6L9 10L12 6" fill="none" stroke="#1d64b4" stroke-width="1.800" /></svg>
            </div>
          </div>
        </div>
        <div class="trans">
          <div class="phead blue"><svg class="pico"><use href="#trn" /></svg><span>Transcript</span><i class="rule"></i><i class="dots"></i><i class="rule end"></i>
            <b><svg><use href="#pls" /></svg></b><b><svg><use href="#pop" /></svg></b><b><svg><use href="#ex" /></svg></b></div>
          <div class="tlog"><div class="tx"><p><i>VSIM 302&gt;</i> run 500 ns</p><p><i>VSIM 303&gt;</i> run 50000 ns</p></div><div class="vscroll"><b><i class="dcar uu"></i></b></div></div>
        </div>
      </div>
    </section>
    <div class="sliver"><svg width="16" height="16"><use href="#M" /></svg></div>
  </div>
</template>

<style>
body { background: #f0f0f0; }
</style>
<style scoped>
* { box-sizing: border-box; }
.desk { position: relative; width: 3840px; height: 1200px; overflow: hidden; background: #fff; font: 11px/13px 'DejaVu Sans Condensed', 'DejaVu Sans', sans-serif; letter-spacing: -.33px; color: #000; white-space: nowrap; }
.defs { position: absolute; }
i, em, u { font-style: normal; text-decoration: none; }
b { font-weight: normal; }
svg { flex: none; display: block; }
.glyph { font: 12px/16px 'Liberation Serif', serif; letter-spacing: 0; }
.glyph.sm { font-size: 9px; letter-spacing: -.4px; }
.wt { font: 11px 'DejaVu Sans Condensed', sans-serif; letter-spacing: -.3px; fill: #fff; }
.tt { font: 11px 'DejaVu Sans Condensed', sans-serif; letter-spacing: -.4px; fill: #38ff14; text-anchor: middle; }
.mono { font: 13px/15px 'Liberation Mono', monospace; letter-spacing: -.8px; }

/* Paint */
.paint { position: absolute; left: 1920px; width: 1920px; overflow: hidden; background: #fff; font: 12px/16px 'Open Sans', 'Noto Sans', sans-serif; letter-spacing: -.1px; color: #333; display: flex; flex-direction: column; }
.paint0 { top: 0; height: 285px; }
.paint1 { top: 285px; height: 915px; }
.ptitle { height: 29px; display: flex; align-items: center; flex: none; }
.qa { height: 17px; width: 17px; }
.pal { width: 20px; height: 20px; }
.bar1, .bar2 { width: 1px; height: 16px; background: #999; }
.bar1 { margin-left: 6px; }
.sv { margin-left: 14px; } .un { margin-left: 9px; } .re { margin-left: 8px; }
.dd { width: 9px; height: 9px; margin-left: 9px; } .bar2 { margin-left: 12px; }
.pname { margin-left: 7px; color: #999; font-size: 13.500px; letter-spacing: .2px; }
.wbtns { margin-left: auto; display: flex; gap: 34px; color: #000; }
.wbtns svg { width: 12px; height: 12px; }
.wbtns.gray { color: #888; gap: 46px; margin-right: 26px; }
.ptabs { height: 29px; display: flex; align-items: center; border-bottom: 1px solid #dadbdc; flex: none; }
.ptabs b { height: 29px; line-height: 28px; text-align: center; }
.pfile { width: 70px; background: #1979ca; color: #fff; }
.phome { width: 69px; background: #f5f6f7; border: 1px solid #dadbdc; border-bottom: 0; }
.pview { width: 62px; }
.chev { margin-left: auto; width: 13px; height: 13px; margin-right: 10px; }
.help { width: 20px; height: 20px; border-radius: 50%; background: #0a66c2; border: 1px solid #064b92; color: #fff; text-align: center; line-height: 18px; font-weight: bold; margin-right: 3px; }
.ribbon { height: 113px; background: #f5f6f7; border-bottom: 1px solid #dadbdc; display: flex; padding-top: 2px; flex: none; }
.rg { height: 108px; border-right: 1px solid #e2e3e4; display: flex; flex-direction: column; justify-content: space-between; padding-top: 2px; }
.rg small { font-size: 12px; line-height: 16px; text-align: center; color: #5c5c5c; }
.rc { display: flex; }
.clip { width: 125px; } .img { width: 142px; } .tools { width: 95px; } .brushes { width: 62px; } .shp { width: 287px; } .size { width: 61px; } .cols { width: 435px; } .p3d { width: 66px; }
.big { height: 82px; display: flex; flex-direction: column; align-items: center; padding-top: 4px; text-align: center; flex: none; }
.big > svg { height: 44px; }
.big > span { line-height: 16px; margin-top: 0; }
.car { width: 0; height: 0; border: 3.500px solid transparent; border-top: 4px solid #333; border-bottom: 0; margin-top: 5px; }
.w48 { width: 62px; } .w49 { width: 49px; } .w50 { width: 51px; } .w54 { width: 50px; } .w61 { width: 58px; } .w62 { width: 60px; } .w66 { width: 64px; }
.on { border: 1px solid #62a2e4; background: #c9e0f7; margin-left: 4px; padding-top: 3px; }
.on hr { width: 100%; border: 0; border-top: 1px solid #62a2e4; margin: 0; height: 1px; }
.on .dash { height: 26px; margin: 6px 0 9px; }
.lines { display: flex; flex-direction: column; }
.lines > span { height: 26px; display: flex; align-items: center; }
.lines svg { margin-right: 5px; }
.lines .car.r { margin: -4px 0 0 5px; }
.dim, .dimt { color: #8e8e8e; }
.dim .car, .dimt .car { border-top-color: #aaa; }
.three { margin: 1px 0 0 5px; }
.clip .lines { margin: 0 0 0 -1px; }
.tg { display: grid; grid-template-columns: repeat(3, 22px); grid-auto-rows: 22px; gap: 14px 5px; padding: 12px 0 0 8px; }
.tg em { font: bold 25px/22px 'Liberation Serif', serif; color: #1f3a5f; text-align: center; }
.brushes svg { height: 40px; margin: -1px 0 5px; }
.sgrid { margin: 3px 0 0 6px; width: 170px; height: 74px; background: #fafcff; border: 1px solid #dadbdc; display: grid; grid-template-columns: repeat(7, 24px); grid-auto-rows: 24px; align-items: center; justify-items: center; }
.sgrid svg { width: 20px; height: 18px; }
.sscroll { margin-top: 3px; width: 17px; height: 73px; border: 1px solid #dadbdc; border-left: 0; display: flex; flex-direction: column; align-items: center; justify-content: space-around; }
.sscroll .up { border-top: 0; border-bottom: 4px solid #aaa; }
.sscroll .ln { box-shadow: 0 -7px 0 -2px #333; }
.shp .lines { margin: 2px 0 0 8px; }
.size .big > svg { margin-top: 1px; height: 34px; margin-bottom: 9px; }
.c1, .c2 { padding-top: 2px; }
.sw { width: 40px; height: 41px; margin-bottom: 3px; border: 2px solid #8492a8; flex: none; }
.sw.black { background: #000; box-shadow: inset 0 0 0 2px #c9d4e2; }
.sw.white { width: 30px; height: 31px; background: #fff; border: 1px solid #777; margin: 6px 0 9px; box-shadow: inset 0 0 0 2px #f3f3f3; }
.pgrid { display: grid; grid-template-columns: repeat(10, 25px); grid-auto-rows: 26px; gap: 1px 2.200px; margin: 1px 0 0 2px; }
.pgrid i { border: 1px solid #a0a0a0; box-shadow: inset 0 0 0 1px #f5f6f7; }
.band { height: 114px; display: flex; background: #fff; }
.band > i { flex: 1; height: 6px; background: #c8d1e2; }
.pscroll { width: 20px; background: #f0f0f0; display: flex; flex-direction: column; align-items: center; padding-top: 6px; flex: none; }
.pscroll svg { width: 11px; height: 11px; }
.pscroll i { width: 19px; background: #cdcdcd; flex: 1; margin-top: 4px; }
.canvas { height: 744px; display: flex; background: #c8d4e6; }
.canvas .pscroll i { margin-top: 211px; }
.strip { width: 25px; flex: none; background: linear-gradient(90deg, #c8d4e6 0 6px, #8a8a8a 6px 7px, #f0f0f0 7px 12px, #808080 12px 14px, #fff 14px); }

/* Simulator windows */
.ms { position: absolute; background: #fff; display: flex; flex-direction: column; overflow: hidden; }
.right { left: 1925px; top: 176px; width: 1894px; height: 108px; }
.main { left: 0; top: 285px; width: 1920px; height: 915px; }
.wave { left: 8px; top: 5px; width: 1920px; height: 280px; border: 1px solid #777; border-width: 1px 1px 0; }
.mtitle { height: 23px; display: flex; align-items: center; padding-left: 3px; font: 12px/16px 'Open Sans', sans-serif; letter-spacing: -.35px; flex: none; }
.mico { width: 14px; height: 14px; margin-right: 6px; }
.main .wbtns { margin-right: 19px; } .right .wbtns { margin-right: -9px; margin-top: -4px; } .main .wbtns { margin-top: -4px; }
.wave .mtitle { height: 30px; padding-left: 8px; }
.wave .wbtns { margin-right: 16px; }
.menu { height: 19px; display: flex; align-items: center; padding-left: 7px; font: 12px/16px 'Open Sans', sans-serif; letter-spacing: -.4px; flex: none; }
.menu span { flex: none; }
.wave .menu { height: 21px; padding-left: 6px; }
.bars { background: #f0f0f0; border-top: 1px solid #999; padding: 0 0 0 2px; display: flex; flex-direction: column; gap: 1px; flex: none; }
.main .bars, .right .bars { height: 66px; box-shadow: 0 -1px #f0f0f0; margin-top: 1px; }
.wave .bars { height: 67px; padding: 0 0 0 3px; }
.brow { display: flex; gap: 2px; height: 31px; }
.tbar { height: 31px; flex: none; display: flex; align-items: center; border: 1px solid #fff; border-right: 2px solid #737373; border-bottom: 2px solid #737373; background: linear-gradient(#888, #888) 3px 1px / 1px 27px no-repeat; }
.tool { flex: none; height: 20px; display: flex; align-items: center; justify-content: center; }
.tool.sep { height: 17px; background: repeating-linear-gradient(#555 0 1px, transparent 1px 2px); width: 1px !important; margin-right: 1px; }
.tool.raised { background: #f0f0f0; box-shadow: inset 1px 1px #fff, inset -1px -1px #777; padding-bottom: 1px; }
.tool.pressed { background: #fff; box-shadow: inset 1px 1px #888; }
.tool.off > * { -webkit-mask: repeating-conic-gradient(#000 0 25%, transparent 0 50%) 0 0 / 2px 2px; mask: repeating-conic-gradient(#000 0 25%, transparent 0 50%) 0 0 / 2px 2px; }
.dcar { width: 0; height: 0; border: 3px solid transparent; border-top: 3px solid #000; border-bottom: 0; margin-top: 3px; flex: none; }
.dcar.uu { border-top: 0; border-bottom: 3px solid #000; margin-top: 0; }
.tbox { width: 59px; height: 19px; line-height: 19px; background: #fff; box-shadow: inset 1px 1px #999; text-align: right; padding-right: 3px; }
.spin { margin-left: 1px; width: 14px; height: 18px; display: flex; flex-direction: column; justify-content: space-around; align-items: center; box-shadow: inset -1px -1px #777; }
.spin i { border: 3.500px solid transparent; border-top: 4px solid #000; border-bottom: 0; }
.spin .u { border-top: 0; border-bottom: 4px solid #000; }
.slab { color: #808080; font-size: 12px; width: 42px; letter-spacing: -.5px; }
.sbox { width: 116px; height: 19px; box-shadow: inset 1px 1px #777, inset -1px -1px #fff; }
.sbtn { width: 17px; height: 17px; margin-left: 2px; display: flex; justify-content: center; align-items: center; box-shadow: inset 1px 1px #fff, inset -1px -1px #777; }
.llab { width: 40px; margin-left: -1px; }
.lbox { width: 123px; height: 19px; line-height: 20px; padding-left: 2px; box-shadow: inset 1px 1px #777, inset -1px -1px #fff; }
.lbtn { width: 18px; height: 18px; margin-left: 2px; box-shadow: inset 1px 1px #fff, inset -1px -1px #777; display: flex; align-items: center; justify-content: center; }
.lbtn i { border: 6.500px solid transparent; border-top: 8px solid #000; border-bottom: 0; }

.phead { height: 19px; display: flex; align-items: center; background: #f0f0f0; padding-left: 2px; font-size: 12px; letter-spacing: -.45px; flex: none; }
.phead .pico { width: 15px; height: 15px; margin-right: 3px; }
.phead.blue { background: #99b4d1; }
.wave .phead { border-top: 1px solid #999; height: 19px; }
.rule { flex: 1; height: 7px; margin-left: 6px; border: solid #555; border-width: 1px 0; box-shadow: inset 0 1px #fff, 0 1px #fff; }
.blue .rule { border-color: #000; box-shadow: inset 0 1px #dff0fa, 0 1px #dff0fa; }
.dots { width: 18px; height: 7px; background: radial-gradient(#444 0 .5px, transparent 1px) 0 0 / 3px 3px; margin: 0 1px; }
.rule.end { margin: 0 4px 0 0; border-right-width: 1px; }
.phead b { width: 13px; height: 13px; margin-left: 3px; box-shadow: inset -1px -1px #777, inset 1px 1px #fff; display: flex; align-items: center; justify-content: center; background: #f0f0f0; }
.phead b svg { width: 10px; height: 10px; }

.whead { height: 19px; display: flex; color: #fff; font-size: 12px; background: #fff; line-height: 18px; flex: none; border-top: 1px solid #777; }
.hn { width: 320px; background: #808080; display: flex; align-items: center; padding-left: 10px; gap: 4px; }
.oico { width: 16px; height: 16px; }
.hm { width: 38px; margin-left: 3px; background: #808080; text-align: right; padding-right: 5px; letter-spacing: -.4px; }
.hb { flex: 1; margin-left: 3px; background: #000; }
.hc { width: 17px; margin: 0 0 0 3px; background: #808080; }
.slist { display: flex; overflow: hidden; background: #fff; flex: none; }
.names { border-right: 2px solid #999; overflow: hidden; flex: none; }
.vals { border-right: 1px solid #999; margin-left: 2px; overflow: hidden; flex: none; }
.srow { height: 17px; display: flex; align-items: center; border-bottom: 1px solid #808080; flex: none; }
.bx { width: 11px; height: 11px; } .dm { width: 14px; height: 14px; }
.plot { background: #000; shape-rendering: crispEdges; }
.vscroll { width: 16px; background: #fff; margin-left: auto; border-left: 1px solid #999; display: flex; flex-direction: column; justify-content: space-between; align-items: center; padding: 2px 0; }
.vscroll b { width: 14px; height: 14px; background: #f0f0f0; box-shadow: inset 1px 1px #fff, inset -1px -1px #777; display: flex; align-items: center; justify-content: center; }

.wave .wbody { display: flex; flex-direction: column; padding-left: 3px; background: #f0f0f0; }
.wave .whead { margin-bottom: 2px; height: 20px; padding-right: 4px; line-height: 19px; }
.wave .hm { width: 41px; } .wave .hb { margin-left: 2px; }
.topw { height: 122px; }
.topw .srow { letter-spacing: -.05px; }
.topw .names .srow:first-child, .topw .vals .srow:first-child { margin-top: -9px; }
.topw .names { width: 322px; padding-left: 8px; } .topw .bx { margin: 0 9px 0 0; } .topw .dm { margin-right: 6px; }
.topw .vals { width: 40px; padding-left: 1px; }
.topw .plot { margin-left: 2px; }
.topw .vscroll { margin-right: 3px; }

.quad .names { width: 314px; }
.quad { flex: 1; }
.quad .names .srow:first-child, .quad .vals .srow:first-child { margin-top: -6px; }
.quad .srow { color: #000; font: 11px/13px 'DejaVu Sans Condensed', sans-serif; letter-spacing: -.05px; }
.quad .bx { margin: 0 5px; width: 10px; } .quad .dm { margin-right: 6px; }
.quad .vals { width: 40px; }
.quad .vals .srow { padding-left: 1px; }
.quad .plot { margin-left: 2px; }

/* Workspace */
.work { flex: 1; background: #c8c8c8; display: flex; flex-direction: column; padding: 0 2px 0 1px; }
.panes { height: 753px; display: flex; }
.pane { background: #f0f0f0; border: 1px solid #999; border-width: 1px 2px 2px 1px; display: flex; flex-direction: column; }
.left { width: 521px; display: flex; flex-direction: column; }
.simp { height: 724px; }
.thead { height: 18px; background: #f0f0f0; display: flex; align-items: center; font-size: 12px; letter-spacing: -.5px; border-top: 1px solid #999; border-bottom: 1px solid #777; overflow: hidden; flex: none; }
.thead > span { border-right: 1px solid #777; height: 18px; line-height: 17px; padding-left: 2px; flex: none; overflow: hidden; }
.fun { width: 12px; height: 9px; flex: none; background: #444; clip-path: polygon(10% 10%, 90% 10%, 55% 100%, 45% 100%); }
.s > span:nth-of-type(1) { width: 225px; } .s > span:nth-of-type(2) { width: 70px; } .s > span:nth-of-type(3) { width: 97px; } .s > span:nth-of-type(4) { width: 96px; }
.tbody { flex: 1; background: #fff; padding-top: 3px; overflow: hidden; }
.irow { display: grid; grid-template-columns: 238px 71px 96px 97px 30px; height: 16px; align-items: center; font-size: 12px; letter-spacing: -.5px; }
.irow > div { display: flex; align-items: center; padding-left: 23px; }
.irow .ic { width: 13px; height: 13px; margin-right: 6px; }
.irow.sel { background: #bfcdda; } .irow.sel > div { padding-left: 6px; } .irow.sel .bx { margin-right: 6px; }
.irow.sub > div { padding-left: 39px; }
.hscroll { height: 16px; display: flex; background: #f7f7f7; align-items: center; flex: none; }
.hscroll b, .hs b { width: 15px; height: 15px; background: #f0f0f0; box-shadow: inset 1px 1px #fff, inset -1px -1px #777; display: flex; align-items: center; justify-content: center; flex: none; }
.hscroll em { width: 227px; height: 15px; background: #f0f0f0; margin-left: 1px; box-shadow: inset 1px 1px #fff, inset -1px -1px #777; }
.prop .hscroll em { width: 161px; }
.hscroll .e { margin-left: auto; }
.tri { border: 3.500px solid transparent; }
.tri.l { border-right: 4px solid #000; border-left: 0; } .tri.r { border-left: 4px solid #000; border-right: 0; }
.tri.l.dim { border-right-color: #999; } .tri.r.dim { border-left-color: #999; }
.tri.big { border-width: 6px 0 6px 5px; height: 0; padding: 0; margin-left: 4px; align-self: center; }
.tabs { flex: none; height: 23px; display: flex; background: #f0f0f0; border-top: 1px solid #000; }
.tabs > span { height: 21px; display: flex; align-items: center; background: #c8c8c8; border: 1px solid #000; border-top: 0; border-radius: 0 0 3px 3px; padding-left: 5px; font-size: 12px; letter-spacing: -.5px; gap: 3px; flex: none; }
.tabs svg { width: 16px; height: 16px; }
.tabs u { color: #aaa; font-size: 11px; margin-left: 2px; }
.tabs .act { background: #f0f0f0; }
.tabs > i { flex: 1; }
.tabs > b { width: 10px; height: 16px; box-shadow: inset -1px -1px #777; text-align: center; }
.middle { width: 380px; margin-left: 8px; display: flex; flex-direction: column; }
.middle .pane { padding-left: 1px; }
.objp { height: 374px; }
.prop { height: 366px; margin-top: 6px; }
.o > span:nth-of-type(1) { width: 174px; } .o > span:nth-of-type(2) { width: 44px; } .o > span:nth-of-type(3) { width: 39px; } .o > span:nth-of-type(4) { width: 17px; border-right: 0; }
.now { width: 77px; height: 16px; background: #e8efe4; border: 1px solid #777; display: flex; align-items: center; justify-content: space-around; flex: none; }
.now .orange { width: 8px; height: 9px; background: #ff8000; border: 1px solid #844; }
.now em { font: 12px 'Liberation Mono', monospace; letter-spacing: -.2px; color: #777; }
.obody { flex: 1; background: #525a8c; padding-top: 2px; }
.orow { width: 315px; height: 16px; background: #bfcdda; border-bottom: 1px solid #525a8c; display: grid; grid-template-columns: 16px 23px 150px 43px 39px 44px; align-items: center; font-size: 12px; letter-spacing: -.5px; }
.orow .bx { margin-left: 5px; } .orow .dm { margin-left: 4px; width: 15px; height: 16px; }
.p > span:nth-of-type(1) { width: 135px; } .p > span:nth-of-type(2) { width: 104px; } .p > span:nth-of-type(3) { width: 58px; } .p > span:nth-of-type(4) { width: 45px; }
.pbody { flex: 1; background: #8ca2ff; padding-top: 1px; margin-bottom: 4px; overflow: hidden; }
.prow { height: 16px; color: #fff; display: grid; grid-template-columns: 39px 110px 103px 59px 44px 40px; align-items: center; font-size: 12px; letter-spacing: -.55px; }
.prow .dm { margin-left: 20px; }
.wavp { flex: 1; margin: 0 8px 0 8px; height: 747px; border-width: 1px 2px 1px 2px; padding-bottom: 0; }
.wavp .whead { margin-top: 2px; }
.wavp .hn { width: 321px; } .wavp .hb { flex: none; width: 610px; margin-left: 4px; }
.simw { height: 610px; border-top: 2px solid #fff; background: #fff; }
.simw .names { width: 322px; padding-top: 3px; background: linear-gradient(90deg, #fff 8px, #808080 8px); }
.simw .vals { width: 39px; padding-top: 3px; background: #808080; }
.simw .srow { background: #000; color: #fff; letter-spacing: -.22px; }
.simw .names .srow { margin-left: 8px; }
.simw .vals .srow { padding-left: 1px; }
.simw .srow.child { background: #808080; border-color: #808080; }
.simw .bx { margin: 0 5px 0 5px; } .simw .dm { margin-right: 6px; }
.simw .child .bx { width: 8px; margin: 0 2px 0 6px; } .simw .child .dm { margin-left: 0; }
.simw .srow.minus { border-bottom-color: #000; }
.tw { width: 10px; height: 17px; margin-left: 12px; background: linear-gradient(#ddd, #ddd) 0 0 / 1px 100% no-repeat, linear-gradient(#ddd, #ddd) 0 9px / 10px 1px no-repeat; }
.last .tw { background: linear-gradient(#ddd, #ddd) 0 0 / 1px 9px no-repeat, linear-gradient(#ddd, #ddd) 0 9px / 10px 1px no-repeat; }
.insert { display: block; height: 1px; background: #000; margin: 0 4px 0 10px; }
.vals .insert { margin: 0 2px; }
.simw .plot { margin-left: 2px; }
.simw .vscroll { background: linear-gradient(#fff 0 146px, #f0f0f0 146px 180px, #fff 180px 196px, #f0f0f0 196px 228px, #fff 228px 244px, #f4f4f4 244px); }
.foot { height: 42px; border-top: 2px solid #fff; display: flex; background: #fff; flex: none; }
.fn { width: 321px; color: #fff; background: #808080; }
.fn > div { display: flex; align-items: center; justify-content: space-between; height: 22px; }
.fn svg { width: 48px; height: 15px; margin-left: 8px; }
.now1 span { margin-right: 9px; font-size: 12px; letter-spacing: -.4px; }
.fn > .cur1 { height: 18px; background: #808080; }
.cur1 svg { width: 40px; } .cur1 span { flex: 1; background: #fff; color: #000; text-align: right; height: 18px; line-height: 18px; padding-right: 9px; font-size: 12px; letter-spacing: -.4px; }
.fv { width: 39px; margin-left: 3px; color: #fff; background: #808080; display: flex; flex-direction: column; overflow: hidden; font-size: 12px; letter-spacing: -.5px; }
.fv span { height: 22px; line-height: 22px; text-align: right; padding-right: 8px; } .fv span + span { background: #fff; color: #000; line-height: 18px; height: 18px; }
.foot .plot { margin-left: 3px; }
.fr { width: 17px; background: #808080; margin-left: 3px; }
.scrolls { height: 21px; display: flex; background: #808080; border-top: 3px solid #fff; align-items: center; flex: none; }
.hs { display: flex; height: 17px; background: #f4f4f4; justify-content: space-between; align-items: center; }
.hs.a { width: 313px; margin-left: 8px; } .hs.b { width: 39px; margin-left: 3px; } .hs.c { width: 610px; margin-left: 3px; background: #c8c8c8; }
.hs em { width: 2px; height: 16px; background: #d8b820; } .hs u { flex: 1; }
.findbar { flex: 1; display: flex; align-items: center; font-size: 12px; letter-spacing: -.45px; padding-left: 2px; }
.findbar b { box-shadow: inset -1px -1px #777, inset 1px 1px #fff; display: flex; align-items: center; justify-content: center; flex: none; }
.x { width: 13px; height: 13px; margin-right: 2px; } .x svg { width: 9px; height: 9px; }
.fbox { width: 682px; height: 19px; margin-left: 6px; background: #fff; box-shadow: inset 1px 1px #999; display: flex; align-items: center; padding-left: 4px; flex: none; }
.fbox svg { width: 14px; height: 14px; }
.fb { width: 19px; height: 20px; } .fb svg { width: 15px; height: 15px; } .m4 { margin-left: 4px; } .m9 { margin-left: 9px; } .m3 { margin-left: 3px; }
.vs { width: 1px; height: 17px; background: repeating-linear-gradient(#333 0 1px, transparent 1px 2px); margin: 0 7px; }
.bigcar { border: 4.500px solid transparent; border-top: 6px solid #000; border-bottom: 0; margin-left: 8px; }
.v2 { margin: 0 14px 0 8px; }
.chk { width: 12px; height: 12px; background: #fff; box-shadow: inset 1px 1px #777; line-height: 12px; }
.rx { margin: 0 13px 0 6px; color: #833; }
.wrap { width: 16px; height: 16px; margin-left: 7px; }
.trans { margin-top: 1px; border: 1px solid #999; border-bottom: 0; margin-right: 3px; }
.tlog { height: 34px; background: #fff; border-top: 1px solid #000; border-left: 2px solid #333; display: flex; }
.tlog p { margin: 0; height: 15px; font: 12px/15px 'Liberation Mono', monospace; letter-spacing: -.25px; }
.tx { padding: 1px 0 0 2px; }
.tlog p i { color: #10107c; font-size: 12px; letter-spacing: -1.400px; margin-right: 1px; }
.sliver { position: absolute; left: 0; top: 0; width: 8px; height: 285px; overflow: hidden; background: linear-gradient(#eee 0 5px, #fff 5px 42px, #f0f0f0 42px 44px, #888 44px 45px, #f0f0f0 45px 140px, #c8c8c8 140px); border-right: 1px solid #777; }
.sliver svg { margin: 5px 0 0 3px; }
</style>
